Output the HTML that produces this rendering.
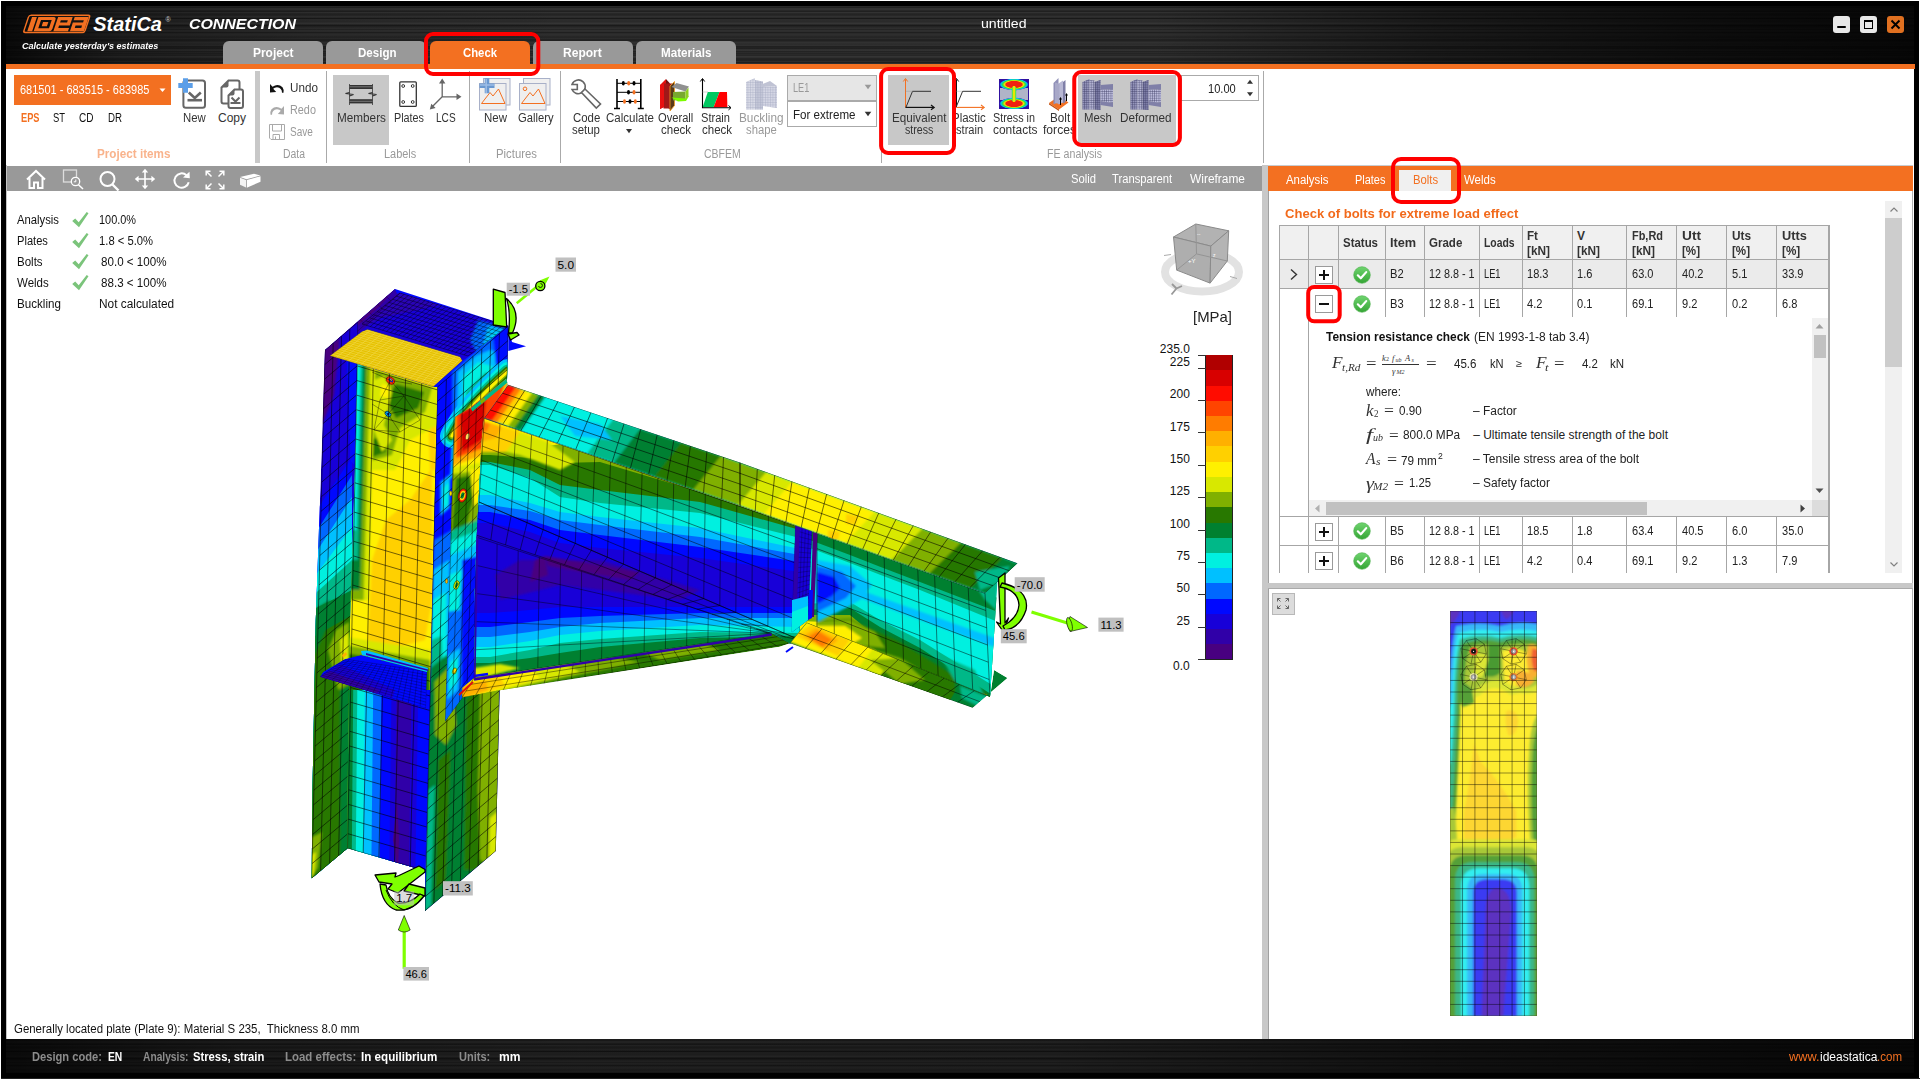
<!DOCTYPE html>
<html lang="en"><head><meta charset="utf-8"><title>IDEA StatiCa Connection</title><style>
html,body{margin:0;padding:0;background:#fff;}
body{width:1920px;height:1079px;position:relative;overflow:hidden;font-family:"Liberation Sans",sans-serif;}
.r{position:absolute;display:block;}
.t{position:absolute;white-space:pre;display:block;transform-origin:0 50%;}
.tex{background:linear-gradient(to right,rgba(0,0,0,.8) 0,rgba(0,0,0,.35) 6%,rgba(0,0,0,.1) 16%,rgba(0,0,0,0) 30%,rgba(0,0,0,0) 60%,rgba(0,0,0,.45) 75%,rgba(0,0,0,.7) 88%,rgba(0,0,0,.85) 100%),repeating-linear-gradient(to bottom,rgba(0,0,0,.0) 0,rgba(0,0,0,.35) 1.5px,rgba(0,0,0,0) 3px,rgba(0,0,0,.25) 5px,rgba(0,0,0,0) 6.5px,rgba(0,0,0,.4) 9px,rgba(0,0,0,0) 11px),repeating-linear-gradient(to bottom,#3a3a3a 0,#222 1px,#464646 2px,#2a2a2a 3px,#404040 4px,#202020 5px,#383838 7px);}
.tex2{background:linear-gradient(to right,rgba(0,0,0,.7) 0,rgba(0,0,0,.25) 12%,rgba(0,0,0,.05) 30%,rgba(0,0,0,.1) 55%,rgba(0,0,0,.5) 75%,rgba(0,0,0,.8) 100%),repeating-linear-gradient(to bottom,rgba(0,0,0,.0) 0,rgba(0,0,0,.35) 1.5px,rgba(0,0,0,0) 3px,rgba(0,0,0,.25) 5px,rgba(0,0,0,0) 6.5px,rgba(0,0,0,.4) 9px,rgba(0,0,0,0) 11px),repeating-linear-gradient(to bottom,#2a2a2a 0,#1a1a1a 1px,#323232 2px,#202020 3px,#2c2c2c 4px,#161616 5px,#282828 7px);}
</style></head><body>
<div class="r" style="left:0px;top:0px;width:1920px;height:1079px;background:#fff;"></div>
<div class="r" style="left:1px;top:1px;width:1918px;height:1077px;background:#000;"></div>
<div class="r tex" style="left:6px;top:6px;width:1908px;height:58px"></div>
<div class="r" style="left:6px;top:64px;width:1909px;height:5px;background:#f37021;"></div>
<div class="r" style="left:6px;top:69px;width:1908px;height:970px;background:#fff;"></div>
<div class="r tex2" style="left:6px;top:1039px;width:1908px;height:33.5px"></div>
<div class="r" style="left:1px;top:1078px;width:1919px;height:1px;background:#222;"></div>
<svg class="r" style="left:0;top:0" width="200" height="60" viewBox="0 0 200 60">
<g transform="translate(0,33.2) skewX(-18.4) translate(0,-33.2)" fill="#f37021">
<rect x="23.1" y="15.3" width="61.1" height="17.2" rx="2" fill="none" stroke="#f37021" stroke-width="1.5"/>
<rect x="26.6" y="16.9" width="4.9" height="14.3"/>
<path d="M33 16.9h15.400q2.500 0 2.500 2.500v9.300q0 2.500-2.500 2.500h-15.400z M36.600 19.900v8.300h10.700v-8.300z M39.300 21.900h5.300v4.300h-5.300z" fill-rule="evenodd"/>
<path d="M52.700 16.900h14.600v8.700h-10.800v2.300h10.800v3.300h-14.600z M56.500 20.200v2.300h7v-2.300z" fill-rule="evenodd"/>
<path d="M69.300 16.900h14v14.300h-14v-8.700h10.200v-2.300h-10.200z M73 25.600v2.300h6.500v-2.300z" fill-rule="evenodd"/>
</g>
<text x="93.3" y="31.2" font-family="Liberation Sans,sans-serif" font-weight="700" font-style="italic" font-size="20" fill="#fff" textLength="68.6" lengthAdjust="spacingAndGlyphs">StatiCa</text>
<text x="165.5" y="22" font-family="Liberation Sans,sans-serif" font-size="7" fill="#ccc">®</text>
</svg>
<span class="t" style="left:189.0px;top:15.3px;font-size:15px;line-height:18.0px;color:#fff;transform:scaleX(1.061);font-weight:700;font-style:italic;">CONNECTION</span>
<span class="t" style="left:21.8px;top:41.2px;font-size:9px;line-height:10.8px;color:#fff;transform:scaleX(1.004);font-weight:700;font-style:italic;">Calculate yesterday&#x27;s estimates</span>
<span class="t" style="left:980.5px;top:16.1px;font-size:13.5px;line-height:16.2px;color:#fff;transform:scaleX(1.045);">untitled</span>
<div class="r" style="left:1833px;top:16px;width:17px;height:17px;background:#e8e8e8;border-radius:3px"></div>
<div class="r" style="left:1837px;top:26px;width:9px;height:2px;background:#000;border-radius:1px"></div>
<div class="r" style="left:1860px;top:16px;width:17px;height:17px;background:#e8e8e8;border-radius:3px"></div>
<div class="r" style="left:1864px;top:20px;width:9px;height:9px;background:#e8e8e8;box-sizing:border-box;border:1.5px solid #000;border-top-width:2px"></div>
<div class="r" style="left:1887px;top:16px;width:17px;height:17px;background:#e07020;border-radius:3px"></div>
<svg class="r" style="left:1887px;top:16px" width="17" height="17"><path d="M4.500 4.500l8 8M12.500 4.500l-8 8" stroke="#000" stroke-width="2"/></svg>
<div class="r" style="left:223px;top:41px;width:100px;height:23px;background:#999;border-radius:6px 6px 0 0"></div>
<span class="t" style="left:253.0px;top:44.9px;font-size:13px;line-height:15.6px;color:#fff;transform:scaleX(0.919);font-weight:700;">Project</span>
<div class="r" style="left:326.3px;top:41px;width:100px;height:23px;background:#999;border-radius:6px 6px 0 0"></div>
<span class="t" style="left:357.5px;top:44.9px;font-size:13px;line-height:15.6px;color:#fff;transform:scaleX(0.888);font-weight:700;">Design</span>
<div class="r" style="left:429.7px;top:41px;width:100px;height:23px;background:#f37021;border-radius:6px 6px 0 0"></div>
<span class="t" style="left:463.0px;top:44.9px;font-size:13px;line-height:15.6px;color:#fff;transform:scaleX(0.871);font-weight:700;">Check</span>
<div class="r" style="left:533px;top:41px;width:100px;height:23px;background:#999;border-radius:6px 6px 0 0"></div>
<span class="t" style="left:563.1px;top:44.9px;font-size:13px;line-height:15.6px;color:#fff;transform:scaleX(0.926);font-weight:700;">Report</span>
<div class="r" style="left:636.3px;top:41px;width:100px;height:23px;background:#999;border-radius:6px 6px 0 0"></div>
<span class="t" style="left:660.6px;top:44.9px;font-size:13px;line-height:15.6px;color:#fff;transform:scaleX(0.894);font-weight:700;">Materials</span>
<div class="r" style="left:14px;top:75px;width:157px;height:29.5px;background:#f37021;"></div>
<span class="t" style="left:20.0px;top:83.0px;font-size:12px;line-height:14.4px;color:#fff;transform:scaleX(0.915);">681501 - 683515 - 683985</span>
<svg class="r" style="left:159px;top:88px" width="8" height="5" viewBox="0 0 8 5"><path d="M0.500 0.500h6l-3 3.500z" fill="#fff"/></svg>
<span class="t" style="left:20.5px;top:110.5px;font-size:12px;line-height:14.4px;color:#f37021;transform:scaleX(0.770);font-weight:700;">EPS</span>
<span class="t" style="left:53.0px;top:110.5px;font-size:12px;line-height:14.4px;color:#111;transform:scaleX(0.783);">ST</span>
<span class="t" style="left:78.5px;top:110.5px;font-size:12px;line-height:14.4px;color:#111;transform:scaleX(0.837);">CD</span>
<span class="t" style="left:107.5px;top:110.5px;font-size:12px;line-height:14.4px;color:#111;transform:scaleX(0.808);">DR</span>
<span class="t" style="left:96.5px;top:146.6px;font-size:12px;line-height:14.4px;color:#f9b38c;transform:scaleX(0.975);font-weight:700;">Project items</span>
<svg class="r" style="left:176px;top:76px" width="34" height="35" viewBox="0 0 34 35"><rect x="7.400" y="4.500" width="21.600" height="27.300" rx="2.500" fill="#fff" stroke="#666" stroke-width="2"/>
<path d="M11.500 24.200h14.500" stroke="#666" stroke-width="2.600"/><path d="M12.800 16.500l6 5.500 6-5.500" fill="none" stroke="#666" stroke-width="2.600"/>
<path d="M2.300 9.500h14.400M9.500 2.300v14.400" stroke="#5b9ee8" stroke-width="5"/></svg>
<span class="t" style="left:182.7px;top:110.5px;font-size:12px;line-height:14.4px;color:#333;transform:scaleX(0.946);">New</span>
<svg class="r" style="left:218px;top:76px" width="28" height="35" viewBox="0 0 28 35"><path d="M3.500 11.500l7-7h9q2 0 2 2v19q0 2-2 2h-14q-2 0-2-2z" fill="#fff" stroke="#666" stroke-width="2"/><path d="M3.500 11.500l7-7v5q0 2-2 2z" fill="#666"/>
<path d="M10.500 19.500l6-6h6.500q2 0 2 2v14.500q0 2-2 2h-10.500q-2 0-2-2z" fill="#fff" stroke="#666" stroke-width="2"/><path d="M10.500 19.500l6-6v4q0 2-2 2z" fill="#666"/>
<path d="M12.500 27h10" stroke="#666" stroke-width="2"/><path d="M13.500 21.500l4 4 4-4" fill="none" stroke="#666" stroke-width="2"/></svg>
<span class="t" style="left:218.0px;top:110.5px;font-size:12px;line-height:14.4px;color:#333;transform:scaleX(1.000);">Copy</span>
<div class="r" style="left:255px;top:71px;width:5px;height:92px;background:#c8c8c8;"></div>
<svg class="r" style="left:268px;top:82px" width="18" height="12" viewBox="0 0 18 12"><path d="M2 10.500v-8.500l2.500 2.800q5.500-4 10 0.500q1.500 2 1 5.500h-1.500q0-5-5-5.500q-2.500 0-3.800 1.500l3 3.200z" fill="#111"/></svg>
<span class="t" style="left:289.6px;top:81.0px;font-size:12px;line-height:14.4px;color:#333;transform:scaleX(0.973);">Undo</span>
<svg class="r" style="left:268px;top:104px" width="18" height="12" viewBox="0 0 18 12"><path d="M16 10.500v-8.500l-2.500 2.800q-5.500-4-10 0.500q-1.500 2-1 5.500h1.500q0-5 5-5.500q2.500 0 3.800 1.500l-3 3.200z" fill="#aaa"/></svg>
<span class="t" style="left:289.6px;top:102.6px;font-size:12px;line-height:14.4px;color:#999;transform:scaleX(0.903);">Redo</span>
<svg class="r" style="left:268px;top:123px" width="18" height="18" viewBox="0 0 18 18"><path d="M1.500 1.500h15v15h-13.500l-1.500-1.500z" fill="#fff" stroke="#aaa" stroke-width="1"/><path d="M4.500 1.500v6.500h9v-6.500M5 16.500v-5h6.500v5M7.500 13.500v3" fill="none" stroke="#aaa" stroke-width="1"/></svg>
<span class="t" style="left:289.6px;top:124.6px;font-size:12px;line-height:14.4px;color:#999;transform:scaleX(0.837);">Save</span>
<span class="t" style="left:283.0px;top:146.6px;font-size:12px;line-height:14.4px;color:#999;transform:scaleX(0.868);">Data</span>
<div class="r" style="left:326px;top:71px;width:1px;height:92px;background:#aaa;"></div>
<div class="r" style="left:333px;top:75px;width:56px;height:70px;background:#c8c8c8;"></div>
<svg class="r" style="left:340px;top:80px" width="42" height="28" viewBox="0 0 42 28"><path d="M9.500 4v21M32.500 4v21" stroke="#555" stroke-width="1"/>
<rect x="9.500" y="5" width="23" height="4" fill="#333"/><rect x="9.500" y="6.300" width="23" height="1" fill="#777"/>
<rect x="9.500" y="19.200" width="23" height="4.200" fill="#333"/><rect x="9.500" y="20.800" width="23" height="1" fill="#777"/>
<path d="M9.500 12.500l-4 1 8 1-4 1.500M32.500 12.500l-4 1 8 1-4 1.500" fill="none" stroke="#333" stroke-width="1.200"/></svg>
<span class="t" style="left:336.7px;top:110.5px;font-size:12px;line-height:14.4px;color:#333;transform:scaleX(0.978);">Members</span>
<svg class="r" style="left:396px;top:78px" width="24" height="32" viewBox="0 0 24 32"><rect x="3.800" y="3.800" width="16.500" height="24.600" rx="1" fill="#fff" stroke="#333" stroke-width="1.300"/>
<g fill="#fff" stroke="#333" stroke-width="1"><circle cx="7.200" cy="8" r="1.400"/><circle cx="16.700" cy="8" r="1.400"/><circle cx="7.200" cy="24" r="1.400"/><circle cx="16.700" cy="24" r="1.400"/></g></svg>
<span class="t" style="left:393.7px;top:110.5px;font-size:12px;line-height:14.4px;color:#333;transform:scaleX(0.900);">Plates</span>
<svg class="r" style="left:427px;top:76px" width="37" height="36" viewBox="0 0 37 36"><path d="M15.200 20.800v-15.500M15.200 20.800h16M15.200 20.800l-10.500 10.500" stroke="#666" stroke-width="1.300" fill="none"/>
<path d="M15.200 2.500l-3.200 5h6.400zM34.500 20.800l-5-3.200v6.400zM2.800 33.500l1.500-5.800 4.300 4.300z" fill="#666"/></svg>
<span class="t" style="left:436.4px;top:110.5px;font-size:12px;line-height:14.4px;color:#333;transform:scaleX(0.840);">LCS</span>
<span class="t" style="left:383.5px;top:146.6px;font-size:12px;line-height:14.4px;color:#999;transform:scaleX(0.913);">Labels</span>
<div class="r" style="left:469px;top:71px;width:1px;height:92px;background:#aaa;"></div>
<svg class="r" style="left:479px;top:78px" width="32" height="33" viewBox="0 0 32 33"><rect x="4.5" y="0.500" width="26.500" height="26.500" fill="#f0f0f0" stroke="#a8b0c8" stroke-width="1"/>
<rect x="0.500" y="5.500" width="26.500" height="26.500" fill="#efefef" stroke="#a8b0c8" stroke-width="1"/>
<path d="M2.500 25.500l8.500-11 3 3.500 5.500-7 6.500 14.500z" fill="none" stroke="#f37021" stroke-width="1"/><path d="M0.500 7.800h15M8 0.300v15" stroke="#6a98d0" stroke-width="4.600"/><path d="M1 7h14M7.200 1v14" stroke="#9dbde6" stroke-width="1.500"/></svg>
<span class="t" style="left:483.8px;top:110.5px;font-size:12px;line-height:14.4px;color:#333;transform:scaleX(0.956);">New</span>
<svg class="r" style="left:519px;top:78px" width="32" height="33" viewBox="0 0 32 33"><rect x="4.5" y="0.500" width="26.500" height="26.500" fill="#f0f0f0" stroke="#a8b0c8" stroke-width="1"/>
<rect x="0.500" y="5.500" width="26.500" height="26.500" fill="#efefef" stroke="#a8b0c8" stroke-width="1"/>
<path d="M2.500 25.500l8.500-11 3 3.500 5.500-7 6.500 14.500z" fill="none" stroke="#f37021" stroke-width="1"/><circle cx="6" cy="10.800" r="1.800" fill="none" stroke="#f37021" stroke-width="1"/></svg>
<span class="t" style="left:517.5px;top:110.5px;font-size:12px;line-height:14.4px;color:#333;transform:scaleX(0.934);">Gallery</span>
<span class="t" style="left:495.8px;top:146.6px;font-size:12px;line-height:14.4px;color:#999;transform:scaleX(0.944);">Pictures</span>
<div class="r" style="left:560px;top:71px;width:1px;height:92px;background:#aaa;"></div>
<svg class="r" style="left:569px;top:77px" width="34" height="34" viewBox="0 0 34 34"><path d="M3 7.500a6.800 6.800 0 1 1 9.500 8.300l-0.500 0.300 0 0a6.800 6.800 0 0 1-9-3.600h5.300v-5z" fill="#fff" stroke="#666" stroke-width="1.600"/>
<path d="M12.500 15.500l3.500-3.500 15.500 15-4.200 4z" fill="#fff" stroke="#666" stroke-width="1.600"/></svg>
<span class="t" style="left:572.5px;top:110.5px;font-size:12px;line-height:14.4px;color:#333;transform:scaleX(0.952);">Code</span>
<span class="t" style="left:572.3px;top:122.6px;font-size:12px;line-height:14.4px;color:#333;transform:scaleX(0.950);">setup</span>
<svg class="r" style="left:612px;top:77px" width="34" height="34" viewBox="0 0 34 34"><path d="M5 2v29.500M28.800 2v29.500M2 31.500h6M25.800 31.500h6" stroke="#000" stroke-width="1.600" fill="none"/>
<path d="M5 6.300h23.800M5 15.300h23.800M5 24.500h23.800" stroke="#000" stroke-width="1"/>
<g fill="#000"><ellipse cx="11.300" cy="6.300" rx="1.500" ry="2.200"/><ellipse cx="22" cy="6.300" rx="1.500" ry="2.200"/><ellipse cx="16.500" cy="15.300" rx="1.500" ry="2.200"/><ellipse cx="18" cy="24.500" rx="1.500" ry="2.200"/></g>
<g fill="#f37021"><ellipse cx="16.700" cy="6.300" rx="1.500" ry="2.200"/><ellipse cx="22" cy="15.300" rx="1.500" ry="2.200"/><ellipse cx="12.500" cy="24.500" rx="1.500" ry="2.200"/><ellipse cx="23.300" cy="24.500" rx="1.500" ry="2.200"/></g></svg>
<span class="t" style="left:605.7px;top:110.5px;font-size:12px;line-height:14.4px;color:#333;transform:scaleX(0.960);">Calculate</span>
<svg class="r" style="left:625px;top:128px" width="8" height="6" viewBox="0 0 8 6"><path d="M1 1h6l-3 4.300z" fill="#333"/></svg>
<svg class="r" style="left:658px;top:77px" width="33" height="34" viewBox="0 0 33 34"><path d="M2 8l6-6v27l-6 3z" fill="#e01010"/><path d="M8 2l4 4.500v26l-4-3.500z" fill="#701010"/><path d="M5.500 6.500h8.500v25h-8.500z" fill="#a01818"/><path d="M2 8v24l4-2v-23.500z" fill="#e81010"/>
<path d="M12 9l4.500-4.500v24l-4.500 5.500z" fill="#5a3a18" stroke="#f39a21" stroke-width=".8"/>
<path d="M13.500 10l5-4 12.500 3.500-3.500 5z" fill="#909090"/><path d="M15 15l12.500-0.500 0 8-12.500 1z" fill="#78a830"/><path d="M13.500 20.500l14 1 3.500-2.500-3 5-8 0.500z" fill="#7cfc00"/><path d="M27.500 14.500l3-4v9l-3 3z" fill="#90d020"/></svg>
<span class="t" style="left:657.7px;top:110.5px;font-size:12px;line-height:14.4px;color:#333;transform:scaleX(0.929);">Overall</span>
<span class="t" style="left:660.7px;top:122.6px;font-size:12px;line-height:14.4px;color:#333;transform:scaleX(0.960);">check</span>
<svg class="r" style="left:699px;top:77px" width="34" height="34" viewBox="0 0 34 34"><path d="M3.600 21.800l5.200-15.200h11.700l-5.900 15.200z" transform="translate(0,8.500)" fill="#00c860"/><path d="M14.600 30.300l5.900-15.200h7.500l0.400 15.200z" fill="#ff0000"/>
<path d="M3.500 2v28.700h28" fill="none" stroke="#000" stroke-width="1.100"/><path d="M1.300 4.500l2.200-3 2.200 3M29.500 28.500l2.500 2.200-2.500 2.200" fill="none" stroke="#000" stroke-width="1"/>
<path d="M3.500 15h6" stroke="#888" stroke-width=".8" stroke-dasharray="1 1"/></svg>
<span class="t" style="left:701.0px;top:110.5px;font-size:12px;line-height:14.4px;color:#333;transform:scaleX(0.925);">Strain</span>
<span class="t" style="left:701.7px;top:122.6px;font-size:12px;line-height:14.4px;color:#333;transform:scaleX(0.960);">check</span>
<svg class="r" style="left:745px;top:77px" width="33" height="34" viewBox="0 0 33 34"><defs><pattern id="gr" width="2.500" height="2.500" patternUnits="userSpaceOnUse"><path d="M0 0h2.500M0 0v2.500" stroke="#a4a8c0" stroke-width=".7"/></pattern></defs>
<path d="M1 5l9-4v31.500h-9z" fill="#d8dae6"/><path d="M1 5l9-4v31.500h-9z" fill="url(#gr)"/><path d="M10 3l8 1.500v28h-8z" fill="#c4c7d8"/><path d="M10 3l8 1.500v28h-8z" fill="url(#gr)"/>
<path d="M18 10l14-1v22l-14-2z" fill="#d4d6e4"/><path d="M18 10l14-1v22l-14-2z" fill="url(#gr)"/><path d="M15 8l10-4 7 5-14 1z" fill="#c0c3d4"/></svg>
<span class="t" style="left:738.8px;top:110.5px;font-size:12px;line-height:14.4px;color:#999;transform:scaleX(0.982);">Buckling</span>
<span class="t" style="left:746.2px;top:122.6px;font-size:12px;line-height:14.4px;color:#999;transform:scaleX(0.940);">shape</span>
<div class="r" style="left:787px;top:75px;width:90px;height:26px;background:#e6e6e6;box-sizing:border-box;border:1px solid #aaa"></div>
<span class="t" style="left:792.5px;top:81.4px;font-size:12px;line-height:14.4px;color:#999;transform:scaleX(0.761);">LE1</span>
<svg class="r" style="left:864px;top:84px" width="8" height="6" viewBox="0 0 8 6"><path d="M0.700 0.700h6.600l-3.300 4.600z" fill="#999"/></svg>
<div class="r" style="left:787px;top:101px;width:90px;height:26px;background:#fff;box-sizing:border-box;border:1px solid #aaa"></div>
<span class="t" style="left:792.5px;top:107.6px;font-size:12px;line-height:14.4px;color:#222;transform:scaleX(0.966);">For extreme</span>
<svg class="r" style="left:864px;top:110.5px" width="8" height="6" viewBox="0 0 8 6"><path d="M0.700 0.700h6.600l-3.300 4.600z" fill="#333"/></svg>
<span class="t" style="left:703.8px;top:146.6px;font-size:12px;line-height:14.4px;color:#999;transform:scaleX(0.873);">CBFEM</span>
<div class="r" style="left:881px;top:71px;width:1px;height:92px;background:#aaa;"></div>
<div class="r" style="left:888px;top:75px;width:61px;height:70px;background:#c8c8c8;"></div>
<svg class="r" style="left:900px;top:76px" width="38" height="35" viewBox="0 0 38 35"><path d="M5.500 31.400v-28" stroke="#f37021" stroke-width="1"/><path d="M3.300 5.500l2.200-3 2.200 3" fill="none" stroke="#f37021" stroke-width="1"/>
<path d="M5.500 31.400h28" stroke="#111" stroke-width="1.200"/><path d="M31 29l3.200 2.400-3.200 2.400" fill="none" stroke="#111" stroke-width="1.200"/>
<path d="M6 31.200l6.500-15.900h18.500" fill="none" stroke="#333" stroke-width="1"/><path d="M5.500 15.300h7" stroke="#888" stroke-width=".7" stroke-dasharray="1 1"/></svg>
<span class="t" style="left:891.5px;top:110.6px;font-size:12px;line-height:14.4px;color:#333;transform:scaleX(0.971);">Equivalent</span>
<span class="t" style="left:904.5px;top:122.6px;font-size:12px;line-height:14.4px;color:#333;transform:scaleX(0.887);">stress</span>
<svg class="r" style="left:950px;top:76px" width="38" height="35" viewBox="0 0 38 35"><path d="M6.500 31.400v-28" stroke="#111" stroke-width="1"/><path d="M4.300 5.500l2.200-3 2.200 3" fill="none" stroke="#111" stroke-width="1"/>
<path d="M6.500 31.400h27" stroke="#f37021" stroke-width="1.100"/><path d="M31 29l3.200 2.400-3.200 2.400" fill="none" stroke="#f37021" stroke-width="1.100"/>
<path d="M6.300 30.700l6.300-15.400h18.400" fill="none" stroke="#333" stroke-width="1"/><path d="M6.500 15.300h6" stroke="#888" stroke-width=".7" stroke-dasharray="1 1"/></svg>
<span class="t" style="left:952.0px;top:110.6px;font-size:12px;line-height:14.4px;color:#333;transform:scaleX(0.955);">Plastic</span>
<span class="t" style="left:956.0px;top:122.6px;font-size:12px;line-height:14.4px;color:#333;transform:scaleX(0.927);">strain</span>
<svg class="r" style="left:999px;top:79px" width="30" height="30" viewBox="0 0 30 30"><defs><radialGradient id="sc"><stop offset="0" stop-color="#f02010"/><stop offset=".55" stop-color="#f02010"/><stop offset=".65" stop-color="#ffe000"/><stop offset=".78" stop-color="#30e040"/><stop offset=".9" stop-color="#00c8f0"/><stop offset="1" stop-color="#2020c0"/></radialGradient></defs>
<rect width="30" height="30" fill="#3010a0"/><rect x="1" y="9" width="28" height="12" fill="#b0b4c8"/>
<ellipse cx="15" cy="5.500" rx="14.500" ry="5.800" fill="url(#sc)"/><ellipse cx="15" cy="24.500" rx="14.500" ry="5.800" fill="url(#sc)"/>
<rect x="12.800" y="8" width="4.400" height="14" fill="#40e060"/><rect x="13.800" y="7" width="2.400" height="16" fill="#e8e800"/></svg>
<span class="t" style="left:993.0px;top:110.6px;font-size:12px;line-height:14.4px;color:#333;transform:scaleX(0.900);">Stress in</span>
<span class="t" style="left:992.5px;top:122.6px;font-size:12px;line-height:14.4px;color:#333;transform:scaleX(0.996);">contacts</span>
<svg class="r" style="left:1047px;top:77px" width="24" height="34" viewBox="0 0 24 34"><path d="M2 26l10-7 9.500 6.500-9.500 7z" fill="#f37021"/><path d="M2 26l10 6.500v1.500l-10-6.500z" fill="#c05010"/>
<path d="M6.500 6l5-5v24l-5 2.500z" fill="#9090b8"/><path d="M11.500 6.500l4.500-3v22l-4.500 2z" fill="#b8b8d4"/><path d="M16 5l2.500-2v22l-2.500 1.500z" fill="#8080a8"/><path d="M8 5.500l4.500 1.500v20l-4.500-1z" fill="#a8a8c8"/>
<path d="M13.500 28v-7M19.500 24v-7" stroke="#000" stroke-width="1"/><path d="M12 22.500l1.500-2.500 1.500 2.500zM18 18.500l1.500-2.500 1.500 2.500z" fill="#000"/></svg>
<span class="t" style="left:1049.6px;top:110.6px;font-size:12px;line-height:14.4px;color:#333;transform:scaleX(0.974);">Bolt</span>
<span class="t" style="left:1043.0px;top:122.6px;font-size:12px;line-height:14.4px;color:#333;transform:scaleX(1.010);">forces</span>
<div class="r" style="left:1078px;top:75px;width:98px;height:70px;background:#c8c8c8;"></div>
<svg class="r" style="left:1082px;top:78px" width="32" height="32" viewBox="0 0 32 32"><defs><pattern id="gm1" width="2.200" height="2.200" patternUnits="userSpaceOnUse"><path d="M0 0h2.200M0 0v2.200" stroke="#3c3c64" stroke-width=".7"/></pattern></defs>
<path d="M0.500 4l7-3v30.500h-7z" fill="#9494ba"/><path d="M0.500 4l7-3v30.500h-7z" fill="url(#gm1)"/>
<path d="M7.500 2l5 0.500v29h-5z" fill="#b4b4d4"/><path d="M7.500 2l5 0.500v29h-5z" fill="url(#gm1)"/>
<path d="M12.500 4l6-2v30l-6-0.500z" fill="#7c7ca6"/><path d="M12.500 4l6-2v30l-6-0.500z" fill="url(#gm1)"/>
<path d="M18.500 7l12.500-1 0 5-12.500 1z" fill="#8080a8"/><path d="M18.500 12l12.500-1v14l-12.500-2z" fill="#bcbcdc"/><path d="M18.500 12l12.500-1v14l-12.500-2z" fill="url(#gm1)"/>
<path d="M18.500 23l12.500 2v4l-12.500-2z" fill="#8080a8"/></svg>
<span class="t" style="left:1083.5px;top:110.6px;font-size:12px;line-height:14.4px;color:#333;transform:scaleX(0.946);">Mesh</span>
<svg class="r" style="left:1130px;top:78px" width="32" height="32" viewBox="0 0 32 32"><defs><pattern id="gm2" width="2.200" height="2.200" patternUnits="userSpaceOnUse"><path d="M0 0h2.200M0 0v2.200" stroke="#3c3c64" stroke-width=".7"/></pattern></defs>
<path d="M0.500 4l7-3v30.500h-7z" fill="#9494ba"/><path d="M0.500 4l7-3v30.500h-7z" fill="url(#gm2)"/>
<path d="M7.500 2l5 0.500v29h-5z" fill="#b4b4d4"/><path d="M7.500 2l5 0.500v29h-5z" fill="url(#gm2)"/>
<path d="M12.500 4l6-2v30l-6-0.500z" fill="#7c7ca6"/><path d="M12.500 4l6-2v30l-6-0.500z" fill="url(#gm2)"/>
<path d="M18.500 7l12.500-1 0 5-12.500 1z" fill="#8080a8"/><path d="M18.500 12l12.500-1v14l-12.500-2z" fill="#bcbcdc"/><path d="M18.500 12l12.500-1v14l-12.500-2z" fill="url(#gm2)"/>
<path d="M18.500 23l12.500 2v4l-12.500-2z" fill="#8080a8"/></svg>
<span class="t" style="left:1119.8px;top:110.6px;font-size:12px;line-height:14.4px;color:#333;transform:scaleX(0.977);">Deformed</span>
<div class="r" style="left:1181px;top:75px;width:78px;height:26px;background:#fff;box-sizing:border-box;border:1px solid #aaa"></div>
<span class="t" style="left:1207.5px;top:81.6px;font-size:12px;line-height:14.4px;color:#222;transform:scaleX(0.924);">10.00</span>
<svg class="r" style="left:1246px;top:79px" width="8" height="18" viewBox="0 0 8 18"><path d="M1 4.800h6l-3-4zM1 13.200h6l-3 4z" fill="#333"/></svg>
<span class="t" style="left:1046.9px;top:146.6px;font-size:12px;line-height:14.4px;color:#999;transform:scaleX(0.887);">FE analysis</span>
<div class="r" style="left:1263px;top:71px;width:1px;height:92px;background:#aaa;"></div>
<div class="r" style="left:6px;top:165px;width:1px;height:874px;background:#c4c4c4;"></div>
<div class="r" style="left:7px;top:165.5px;width:1255px;height:25px;background:#999;"></div>
<svg class="r" style="left:24px;top:168px" width="24" height="22" viewBox="0 0 24 22"><path d="M3 11.500l9-8.500 9 8.500M5.500 10v10h4.500v-5.500h4v5.500h4.500v-10" fill="none" stroke="#fff" stroke-width="2" stroke-linejoin="miter"/></svg>
<svg class="r" style="left:61px;top:168px" width="24" height="22" viewBox="0 0 24 22"><rect x="2.500" y="2" width="13" height="12" fill="none" stroke="#ddd" stroke-width="1.300"/><circle cx="14.500" cy="13.500" r="4.200" fill="#999" stroke="#fff" stroke-width="1.300"/><path d="M17.500 16.700l4.500 4.300" stroke="#fff" stroke-width="1.500"/><path d="M14.800 11.500v2.300h-2" fill="none" stroke="#fff" stroke-width="1"/></svg>
<svg class="r" style="left:98px;top:168px" width="24" height="24" viewBox="0 0 24 24"><circle cx="9.500" cy="11" r="7" fill="none" stroke="#fff" stroke-width="2"/><path d="M14.500 16.500l6 6" stroke="#fff" stroke-width="2.400"/></svg>
<svg class="r" style="left:134px;top:168px" width="22" height="22" viewBox="0 0 22 22"><path d="M11 2v18M2 11h18" stroke="#fff" stroke-width="1.600"/><path d="M11 0.800l3.200 3.800h-6.400zM11 21.200l3.200-3.800h-6.400zM0.800 11l3.800-3.200v6.400zM21.200 11l-3.800-3.200v6.400z" fill="#fff"/></svg>
<svg class="r" style="left:171px;top:170px" width="20" height="20" viewBox="0 0 20 20"><path d="M15.500 5.200a7.200 7.200 0 1 0 2.200 7" fill="none" stroke="#fff" stroke-width="2"/><path d="M12 7.500l6.800 0.700-0.300-6.500z" fill="#fff"/></svg>
<svg class="r" style="left:204px;top:169px" width="22" height="22" viewBox="0 0 22 22"><g fill="none" stroke="#fff" stroke-width="1.500"><path d="M2.200 6.500v-4.300h4.300M2.500 2.500l5 5M15.500 2.200h4.300v4.300M19.500 2.500l-5 5M2.200 15.500v4.300h4.300M2.500 19.500l5-5M19.800 15.500v4.300h-4.300M19.500 19.500l-5-5"/></g></svg>
<svg class="r" style="left:238px;top:172px" width="24" height="17" viewBox="0 0 24 17"><path d="M2 5l14-3.200 6.500 1.700-14 3.800z" fill="#fff"/><path d="M2 5.800l6 2.200v7.500l-6-2.800z" fill="#f4f4f4"/><path d="M8.800 8l13.700-3.700v5.500l-13.700 5.900z" fill="#fff"/></svg>
<span class="t" style="left:1071.0px;top:172.0px;font-size:12px;line-height:14.4px;color:#fff;transform:scaleX(0.937);">Solid</span>
<span class="t" style="left:1112.0px;top:172.0px;font-size:12px;line-height:14.4px;color:#fff;transform:scaleX(0.934);">Transparent</span>
<span class="t" style="left:1190.0px;top:172.0px;font-size:12px;line-height:14.4px;color:#fff;transform:scaleX(0.994);">Wireframe</span>
<span class="t" style="left:17.1px;top:212.6px;font-size:12px;line-height:14.4px;color:#111;transform:scaleX(0.940);">Analysis</span>
<span class="t" style="left:98.8px;top:212.6px;font-size:12px;line-height:14.4px;color:#111;transform:scaleX(0.909);">100.0%</span>
<svg class="r" style="left:71px;top:210.6px" width="19" height="17" viewBox="0 0 19 17"><path d="M1.200 10l3-2.600 3.500 3.800 8-10.200 1.800 1.300-9.500 14z" fill="#7bc47b"/></svg>
<span class="t" style="left:17.1px;top:233.7px;font-size:12px;line-height:14.4px;color:#111;transform:scaleX(0.926);">Plates</span>
<span class="t" style="left:98.8px;top:233.7px;font-size:12px;line-height:14.4px;color:#111;transform:scaleX(0.937);">1.8 &lt; 5.0%</span>
<svg class="r" style="left:71px;top:231.7px" width="19" height="17" viewBox="0 0 19 17"><path d="M1.200 10l3-2.600 3.500 3.800 8-10.200 1.800 1.300-9.500 14z" fill="#7bc47b"/></svg>
<span class="t" style="left:17.1px;top:254.6px;font-size:12px;line-height:14.4px;color:#111;transform:scaleX(0.960);">Bolts</span>
<span class="t" style="left:101.3px;top:254.6px;font-size:12px;line-height:14.4px;color:#111;transform:scaleX(0.967);">80.0 &lt; 100%</span>
<svg class="r" style="left:71px;top:252.60000000000002px" width="19" height="17" viewBox="0 0 19 17"><path d="M1.200 10l3-2.600 3.500 3.800 8-10.200 1.800 1.300-9.500 14z" fill="#7bc47b"/></svg>
<span class="t" style="left:17.1px;top:275.5px;font-size:12px;line-height:14.4px;color:#111;transform:scaleX(0.957);">Welds</span>
<span class="t" style="left:101.3px;top:275.5px;font-size:12px;line-height:14.4px;color:#111;transform:scaleX(0.967);">88.3 &lt; 100%</span>
<svg class="r" style="left:71px;top:273.5px" width="19" height="17" viewBox="0 0 19 17"><path d="M1.200 10l3-2.600 3.500 3.800 8-10.200 1.800 1.300-9.500 14z" fill="#7bc47b"/></svg>
<span class="t" style="left:17.1px;top:296.5px;font-size:12px;line-height:14.4px;color:#111;transform:scaleX(0.968);">Buckling</span>
<span class="t" style="left:98.8px;top:296.5px;font-size:12px;line-height:14.4px;color:#111;transform:scaleX(0.989);">Not calculated</span>
<svg class="r" style="left:1155px;top:218px" width="100" height="82" viewBox="0 0 100 82"><ellipse cx="47" cy="54" rx="37" ry="19.500" fill="none" stroke="#e2e2e2" stroke-width="8"/>
<g stroke="#8a8a8a" stroke-width="1" stroke-linejoin="round"><path d="M18.500 19l22.300-13 32.900 6.800-17.900 15.300z" fill="#b2b2b2"/><path d="M18.500 19l37.300 9.100-0.700 37-33.400-13z" fill="#aeaeae"/><path d="M55.800 28.100l17.900-15.300-1.400 30.200-17.200 22.100z" fill="#b4b4b4"/>
<path d="M40.800 6l0.700 29.900-19.800 16.200M41.500 35.900l30.800 7.100" fill="none" stroke="#949494"/></g>
<path d="M17 66l4.500 4.500M27 68l-5.500 2.500-5 6" fill="none" stroke="#999" stroke-width="1.800"/>
<path d="M9 37.500l7-1M75 58.500l7 2" stroke="#aaa" stroke-width="1"/><text x="33" y="45" font-size="6" fill="#fff" font-family="Liberation Sans,sans-serif">+Y</text><text x="58" y="39" font-size="5" fill="#fff" font-family="Liberation Sans,sans-serif">z</text><text x="42" y="18" font-size="5" fill="#fff" font-family="Liberation Sans,sans-serif">--</text></svg>
<span class="t" style="left:1192.6px;top:308.1px;font-size:15px;line-height:18.0px;color:#222;transform:scaleX(0.993);">[MPa]</span>
<div class="r" style="left:1205.5px;top:355.2px;width:26.5px;height:15.52px;background:#b00000;"></div>
<div class="r" style="left:1205.5px;top:370.41px;width:26.5px;height:15.52px;background:#d80000;"></div>
<div class="r" style="left:1205.5px;top:385.63px;width:26.5px;height:15.52px;background:#ff0c00;"></div>
<div class="r" style="left:1205.5px;top:400.84px;width:26.5px;height:15.52px;background:#ff4400;"></div>
<div class="r" style="left:1205.5px;top:416.06px;width:26.5px;height:15.52px;background:#ff7c00;"></div>
<div class="r" style="left:1205.5px;top:431.27px;width:26.5px;height:15.52px;background:#ffb000;"></div>
<div class="r" style="left:1205.5px;top:446.49px;width:26.5px;height:15.52px;background:#ffd000;"></div>
<div class="r" style="left:1205.5px;top:461.7px;width:26.5px;height:15.52px;background:#fff000;"></div>
<div class="r" style="left:1205.5px;top:476.92px;width:26.5px;height:15.52px;background:#d8e800;"></div>
<div class="r" style="left:1205.5px;top:492.13px;width:26.5px;height:15.52px;background:#80b000;"></div>
<div class="r" style="left:1205.5px;top:507.35px;width:26.5px;height:15.52px;background:#287800;"></div>
<div class="r" style="left:1205.5px;top:522.57px;width:26.5px;height:15.52px;background:#008030;"></div>
<div class="r" style="left:1205.5px;top:537.78px;width:26.5px;height:15.52px;background:#00b888;"></div>
<div class="r" style="left:1205.5px;top:553.0px;width:26.5px;height:15.52px;background:#00f0e0;"></div>
<div class="r" style="left:1205.5px;top:568.21px;width:26.5px;height:15.52px;background:#00c0ff;"></div>
<div class="r" style="left:1205.5px;top:583.42px;width:26.5px;height:15.52px;background:#0068ff;"></div>
<div class="r" style="left:1205.5px;top:598.64px;width:26.5px;height:15.52px;background:#0008ff;"></div>
<div class="r" style="left:1205.5px;top:613.86px;width:26.5px;height:15.52px;background:#1800d8;"></div>
<div class="r" style="left:1205.5px;top:629.07px;width:26.5px;height:15.52px;background:#3000a8;"></div>
<div class="r" style="left:1205.5px;top:644.28px;width:26.5px;height:15.52px;background:#480080;"></div>
<div class="r" style="left:1205px;top:355.2px;width:1px;height:304.5px;background:#222;"></div>
<div class="r" style="left:1231.5px;top:355.2px;width:1px;height:304.5px;background:#222;"></div>
<div class="r" style="left:1205px;top:659.2px;width:27.5px;height:1px;background:#222;"></div>
<span class="t" style="left:1159.8px;top:342.0px;font-size:12px;line-height:14.4px;color:#111;transform:scaleX(1.000);">235.0</span>
<div class="r" style="left:1198px;top:354.7px;width:7.5px;height:1px;background:#333;"></div>
<span class="t" style="left:1169.8px;top:354.7px;font-size:12px;line-height:14.4px;color:#111;transform:scaleX(1.000);">225</span>
<div class="r" style="left:1198px;top:367.6px;width:7.5px;height:1px;background:#333;"></div>
<span class="t" style="left:1169.8px;top:386.9px;font-size:12px;line-height:14.4px;color:#111;transform:scaleX(1.000);">200</span>
<div class="r" style="left:1198px;top:400.0px;width:7.5px;height:1px;background:#333;"></div>
<span class="t" style="left:1169.8px;top:419.9px;font-size:12px;line-height:14.4px;color:#111;transform:scaleX(1.000);">175</span>
<div class="r" style="left:1198px;top:432.4px;width:7.5px;height:1px;background:#333;"></div>
<span class="t" style="left:1169.8px;top:451.9px;font-size:12px;line-height:14.4px;color:#111;transform:scaleX(1.000);">150</span>
<div class="r" style="left:1198px;top:464.8px;width:7.5px;height:1px;background:#333;"></div>
<span class="t" style="left:1169.8px;top:483.7px;font-size:12px;line-height:14.4px;color:#111;transform:scaleX(1.000);">125</span>
<div class="r" style="left:1198px;top:497.1px;width:7.5px;height:1px;background:#333;"></div>
<span class="t" style="left:1169.8px;top:516.9px;font-size:12px;line-height:14.4px;color:#111;transform:scaleX(1.000);">100</span>
<div class="r" style="left:1198px;top:529.5px;width:7.5px;height:1px;background:#333;"></div>
<span class="t" style="left:1176.5px;top:548.7px;font-size:12px;line-height:14.4px;color:#111;transform:scaleX(1.000);">75</span>
<div class="r" style="left:1198px;top:561.9px;width:7.5px;height:1px;background:#333;"></div>
<span class="t" style="left:1176.5px;top:580.8px;font-size:12px;line-height:14.4px;color:#111;transform:scaleX(1.000);">50</span>
<div class="r" style="left:1198px;top:594.3px;width:7.5px;height:1px;background:#333;"></div>
<span class="t" style="left:1176.5px;top:613.6px;font-size:12px;line-height:14.4px;color:#111;transform:scaleX(1.000);">25</span>
<div class="r" style="left:1198px;top:626.6px;width:7.5px;height:1px;background:#333;"></div>
<span class="t" style="left:1173.1px;top:659.3px;font-size:12px;line-height:14.4px;color:#111;transform:scaleX(1.000);">0.0</span>
<div class="r" style="left:1198px;top:659.0px;width:7.5px;height:1px;background:#333;"></div>
<span class="t" style="left:14.2px;top:1021.6px;font-size:12px;line-height:14.4px;color:#111;transform:scaleX(0.953);">Generally located plate (Plate 9): Material S 235,  Thickness 8.0 mm</span>
<svg class="r" style="left:0;top:0" width="1262" height="1039" viewBox="0 0 1262 1039"><defs><filter id="b1" x="-10%" y="-10%" width="120%" height="120%"><feGaussianBlur stdDeviation="1.2"/></filter><filter id="b2" x="-10%" y="-10%" width="120%" height="120%"><feGaussianBlur stdDeviation="2.5"/></filter></defs><polygon points="325.0,350.0 395.0,289.0 508.3,325.8 495.8,851.0 425.0,911.0 425.0,870.8 347.5,848.3 311.7,878.3" fill="#0008ff" /><clipPath id="c1"><polygon points="395.0,289.0 397.0,294.0 400.0,292.5 508.3,325.8 508.3,350.0 473.3,353.3 462.5,361.0 460.0,356.7 367.5,329.2 362.0,331.5 330.0,355.8 325.0,350.0"/></clipPath><g clip-path="url(#c1)"><polygon points="395.0,289.0 397.0,294.0 400.0,292.5 508.3,325.8 508.3,350.0 473.3,353.3 462.5,361.0 460.0,356.7 367.5,329.2 362.0,331.5 330.0,355.8 325.0,350.0" fill="#1800d8" /><polygon points="395.0,289.0 325.0,350.0 330.0,356.0 366.0,327.0 400.0,294.0" fill="#3000a8" /><polygon points="395.0,289.0 325.0,350.0 327.0,353.0 380.0,306.0" fill="#480080" /><polygon points="400.0,293.0 440.0,305.0 380.0,318.0 366.0,327.0" fill="#2a04b8" /><g filter="url(#b1)"><polygon points="478.0,320.0 508.0,328.0 508.0,350.0 476.0,352.0 470.0,340.0" fill="#0068ff" /><polygon points="488.0,326.0 508.0,330.0 508.0,350.0 482.0,350.0" fill="#00c0ff" /><polygon points="494.0,334.0 508.0,334.0 508.0,348.0 488.0,350.0" fill="#00f0e0" /></g><path d="M400.0 293.0L362.0 324.0M404.2 294.3L366.1 325.2M408.3 295.5L370.2 326.5M412.5 296.8L374.2 327.7M416.7 298.0L378.3 328.9M420.8 299.3L382.4 330.2M425.0 300.6L386.5 331.4M429.2 301.8L390.5 332.6M433.3 303.1L394.6 333.8M437.5 304.4L398.7 335.1M441.7 305.6L402.8 336.3M445.8 306.9L406.8 337.5M450.0 308.1L410.9 338.8M454.1 309.4L415.0 340.0M458.3 310.7L419.1 341.2M462.5 311.9L423.2 342.5M466.6 313.2L427.2 343.7M470.8 314.4L431.3 344.9M475.0 315.7L435.4 346.2M479.1 317.0L439.5 347.4M483.3 318.2L443.5 348.6M487.5 319.5L447.6 349.8M491.6 320.8L451.7 351.1M495.8 322.0L455.8 352.3M500.0 323.3L459.8 353.5M504.1 324.5L463.9 354.8M508.3 325.8L468.0 356.0M400.0 293.0L508.3 325.8M396.2 296.1L504.3 328.8M392.4 299.2L500.2 331.8M388.6 302.3L496.2 334.9M384.8 305.4L492.2 337.9M381.0 308.5L488.1 340.9M377.2 311.6L484.1 343.9M373.4 314.7L480.1 346.9M369.6 317.8L476.1 350.0M365.8 320.9L472.0 353.0M362.0 324.0L468.0 356.0" fill="none" stroke="#000" stroke-width="0.6" opacity="0.7"/><path d="M395.0 289.0L325.0 350.0M400.0 293.0L330.0 356.0M395.0 289.0L400.0 293.0M386.2 296.6L391.2 300.9M377.5 304.2L382.5 308.8M368.8 311.9L373.8 316.6M360.0 319.5L365.0 324.5M351.2 327.1L356.2 332.4M342.5 334.8L347.5 340.2M333.8 342.4L338.8 348.1M325.0 350.0L330.0 356.0" fill="none" stroke="#000" stroke-width="0.5" opacity="0.5"/></g><polygon points="508.3,326.0 508.3,351.0 526.0,346.3 512.0,342.0" fill="#0008ff" /><clipPath id="c2"><polygon points="325.0,350.0 358.0,322.0 355.8,440.0 350.0,620.0 347.5,790.0 347.5,848.3 311.7,878.3 312.5,790.0 315.8,620.0 321.7,450.0"/></clipPath><g clip-path="url(#c2)"><polygon points="325.0,350.0 358.0,322.0 355.8,440.0 350.0,620.0 347.5,790.0 347.5,848.3 311.7,878.3 312.5,790.0 315.8,620.0 321.7,450.0" fill="#1800d8" /><polygon points="308.0,523.0 352.0,457.0 352.0,900.0 308.0,900.0" fill="#0008ff" /><polygon points="308.0,545.0 352.0,475.0 352.0,900.0 308.0,900.0" fill="#0068ff" /><polygon points="308.0,565.0 352.0,497.0 352.0,900.0 308.0,900.0" fill="#00c0ff" /><polygon points="308.0,585.0 352.0,527.0 352.0,900.0 308.0,900.0" fill="#00f0e0" /><polygon points="308.0,600.0 352.0,560.0 352.0,900.0 308.0,900.0" fill="#00b888" /><polygon points="308.0,612.0 352.0,590.0 352.0,900.0 308.0,900.0" fill="#008030" /><polygon points="308.0,640.0 352.0,615.0 352.0,900.0 308.0,900.0" fill="#287800" /><polygon points="315.4,640.0 349.7,625.0 347.5,900.0 311.7,900.0" fill="#287800" /><g filter="url(#b1)"><polygon points="340.0,690.0 350.0,685.0 350.0,850.0 340.0,858.0" fill="#008030" /><polygon points="328.0,650.0 336.0,630.0 349.0,622.0 349.0,684.0 338.0,690.0" fill="#80b000" /><polygon points="340.0,640.0 349.0,632.0 349.0,672.0 342.0,676.0" fill="#d8e800" /><polygon points="310.0,612.0 330.0,600.0 326.0,630.0 312.0,660.0" fill="#008030" /><polygon points="310.0,838.0 322.0,832.0 318.0,868.0 310.0,880.0" fill="#80b000" /><polygon points="310.0,856.0 316.0,852.0 314.0,874.0 310.0,880.0" fill="#d8e800" /><polygon points="321.0,352.0 340.0,337.0 334.0,395.0 322.0,425.0" fill="#480080" /><polygon points="346.0,345.0 358.0,334.0 357.0,470.0 350.0,460.0" fill="#0008ff" /></g><path d="M325.0 350.0L311.7 878.3M333.2 343.0L320.6 870.8M341.5 336.0L329.6 863.3M349.8 329.0L338.6 855.8M358.0 322.0L347.5 848.3M325.0 350.0L358.0 322.0M324.6 364.7L357.7 336.6M324.3 379.4L357.4 351.2M323.9 394.0L357.1 365.9M323.5 408.7L356.8 380.5M323.2 423.4L356.5 395.1M322.8 438.0L356.2 409.7M322.4 452.7L356.0 424.3M322.0 467.4L355.7 439.0M321.7 482.1L355.4 453.6M321.3 496.8L355.1 468.2M320.9 511.4L354.8 482.8M320.6 526.1L354.5 497.4M320.2 540.8L354.2 512.1M319.8 555.5L353.9 526.7M319.5 570.1L353.6 541.3M319.1 584.8L353.3 555.9M318.7 599.5L353.0 570.5M318.4 614.1L352.8 585.1M318.0 628.8L352.5 599.8M317.6 643.5L352.2 614.4M317.2 658.2L351.9 629.0M316.9 672.9L351.6 643.6M316.5 687.5L351.3 658.2M316.1 702.2L351.0 672.9M315.8 716.9L350.7 687.5M315.4 731.5L350.4 702.1M315.0 746.2L350.1 716.7M314.7 760.9L349.8 731.3M314.3 775.6L349.5 746.0M313.9 790.2L349.2 760.6M313.5 804.9L349.0 775.2M313.2 819.6L348.7 789.8M312.8 834.3L348.4 804.4M312.4 848.9L348.1 819.1M312.1 863.6L347.8 833.7M311.7 878.3L347.5 848.3" fill="none" stroke="#000" stroke-width="0.7" opacity="0.8"/></g><clipPath id="c3"><polygon points="357.3,364.0 433.3,386.7 437.5,387.0 436.2,440.0 431.9,620.0 427.9,790.0 425.0,870.8 347.5,848.3 347.5,790.0 350.0,620.0 355.8,440.0"/></clipPath><g clip-path="url(#c3)"><polygon points="357.3,364.0 433.3,386.7 437.5,387.0 436.2,440.0 431.9,620.0 427.9,790.0 425.0,870.8 347.5,848.3 347.5,790.0 350.0,620.0 355.8,440.0" fill="#fff000" /><g filter="url(#b1)"><polygon points="432.0,468.0 410.0,500.0 386.0,520.0 372.0,560.0 368.0,640.0 385.0,650.0 425.0,640.0 432.0,600.0" fill="#ffd000" /><polygon points="436.0,395.0 428.0,400.0 430.0,470.0 436.0,470.0" fill="#ffd000" /><polygon points="366.0,366.0 440.0,388.0 438.0,425.0 410.0,440.0 395.0,470.0 366.0,470.0" fill="#d8e800" /><polygon points="368.0,368.0 432.0,388.0 425.0,412.0 400.0,428.0 392.0,455.0 368.0,462.0" fill="#80b000" /><polygon points="396.0,384.0 424.0,392.0 418.0,408.0 396.0,418.0 386.0,400.0" fill="#287800" /><polygon points="370.0,440.0 384.0,436.0 386.0,452.0 370.0,458.0" fill="#287800" /><polygon points="374.0,380.0 384.0,376.0 392.0,392.0 384.0,425.0 392.0,440.0 382.0,452.0 374.0,430.0" fill="#d8e800" /><polygon points="382.0,384.0 390.0,386.0 388.0,398.0 380.0,396.0" fill="#fff000" /><polygon points="354.3,362.0 375.3,362.0 368.6,600.0 347.6,600.0" fill="#d8e800" /><polygon points="354.3,362.0 370.3,362.0 363.6,600.0 347.6,600.0" fill="#80b000" /><polygon points="354.3,362.0 366.3,362.0 360.0,590.0 348.0,590.0" fill="#008030" /><polygon points="354.3,362.0 363.3,362.0 357.9,560.0 348.9,560.0" fill="#00b888" /><polygon points="353.3,362.0 360.8,362.0 356.4,530.0 348.9,530.0" fill="#00f0e0" /><polygon points="340.0,636.0 430.0,650.0 430.0,720.0 340.0,700.0" fill="#d8e800" /><polygon points="340.0,644.0 430.0,660.0 430.0,720.0 340.0,700.0" fill="#80b000" /><polygon points="340.0,652.0 430.0,668.0 430.0,720.0 340.0,700.0" fill="#287800" /></g><polygon points="346.0,690.0 431.0,690.0 427.9,880.0 344.6,880.0" fill="#008030" /><polygon points="353.2,690.0 431.0,690.0 427.9,880.0 351.6,880.0" fill="#00b888" /><polygon points="357.3,690.0 431.0,690.0 427.9,880.0 355.6,880.0" fill="#00f0e0" /><polygon points="364.8,690.0 431.0,690.0 427.9,880.0 363.0,880.0" fill="#00c0ff" /><polygon points="373.2,690.0 431.0,690.0 427.9,880.0 371.2,880.0" fill="#0068ff" /><polygon points="381.5,690.0 431.0,690.0 427.9,880.0 379.4,880.0" fill="#0008ff" /><polygon points="391.5,690.0 431.0,690.0 427.9,880.0 389.1,880.0" fill="#1800d8" /><polygon points="396.5,690.0 431.0,690.0 427.9,880.0 394.1,880.0" fill="#3000a8" /><polygon points="411.5,690.0 431.0,690.0 427.9,880.0 408.8,880.0" fill="#1800d8" /><polygon points="418.2,690.0 431.0,690.0 427.9,880.0 415.3,880.0" fill="#0008ff" /><polygon points="393.0,840.0 397.0,800.0 399.0,840.0 398.0,872.0" fill="#480080" /><ellipse cx="390.500" cy="380.500" rx="4.600" ry="3.300" transform="rotate(35 390.5 380.5)" fill="#ff3000" stroke="#701000" stroke-width=".6"/><ellipse cx="390.800" cy="380.300" rx="2.600" ry="1.500" transform="rotate(35 390.8 380.3)" fill="#0030ff"/><ellipse cx="391" cy="380.200" rx="1.200" ry=".7" transform="rotate(35 391 380.2)" fill="#fff000"/><ellipse cx="388" cy="414" rx="3.400" ry="2.200" transform="rotate(40 388 414)" fill="#00c0ff" stroke="#003" stroke-width=".6"/><ellipse cx="388" cy="414" rx="1.600" ry="1" transform="rotate(40 388 414)" fill="#0030e0"/><path d="M358.0 322.0L347.5 848.3M374.2 326.9L363.2 852.8M390.4 331.7L378.9 857.3M406.5 336.6L394.5 861.8M422.7 341.4L410.2 866.3M438.9 346.3L425.9 870.8M358.0 322.0L438.9 346.3M357.7 336.6L438.5 360.9M357.4 351.2L438.2 375.4M357.1 365.9L437.8 390.0M356.8 380.5L437.5 404.6M356.5 395.1L437.1 419.1M356.2 409.7L436.7 433.7M356.0 424.3L436.4 448.3M355.7 439.0L436.0 462.9M355.4 453.6L435.6 477.4M355.1 468.2L435.3 492.0M354.8 482.8L434.9 506.6M354.5 497.4L434.6 521.1M354.2 512.1L434.2 535.7M353.9 526.7L433.8 550.3M353.6 541.3L433.5 564.8M353.3 555.9L433.1 579.4M353.0 570.5L432.8 594.0M352.8 585.1L432.4 608.5M352.5 599.8L432.0 623.1M352.2 614.4L431.7 637.7M351.9 629.0L431.3 652.3M351.6 643.6L431.0 666.8M351.3 658.2L430.6 681.4M351.0 672.9L430.2 696.0M350.7 687.5L429.9 710.5M350.4 702.1L429.5 725.1M350.1 716.7L429.1 739.7M349.8 731.3L428.8 754.2M349.5 746.0L428.4 768.8M349.2 760.6L428.1 783.4M349.0 775.2L427.7 798.0M348.7 789.8L427.3 812.5M348.4 804.4L427.0 827.1M348.1 819.1L426.6 841.7M347.8 833.7L426.3 856.2M347.5 848.3L425.9 870.8" fill="none" stroke="#000" stroke-width="0.7" opacity="0.8"/><path d="M390.500 380.500L372 372M390.500 380.500L380 400M390.500 380.500L404 396M390.500 380.500L412 384M388 414L372 404M388 414L374 430M388 414L400 432M388 414L408 410M388 414L404 396M380 400L404 396L420 420L400 432L374 430Z" fill="none" stroke="#000" stroke-width=".5" opacity=".7"/></g><clipPath id="c4"><polygon points="320.0,676.7 323.0,672.0 345.0,659.0 361.0,655.0 427.0,671.7 426.0,708.3"/></clipPath><g clip-path="url(#c4)"><polygon points="320.0,676.7 323.0,672.0 345.0,659.0 361.0,655.0 427.0,671.7 426.0,708.3" fill="#0008ff" /><polygon points="320.0,677.0 340.0,664.0 395.0,690.0 392.0,700.0" fill="#1800d8" /><polygon points="320.0,677.0 330.0,671.0 380.0,690.0 376.0,694.0" fill="#3000a8" /><path d="M345.0 659.0L320.0 676.7M349.6 659.7L325.9 678.5M354.1 660.4L331.8 680.2M358.7 661.1L337.7 682.0M363.2 661.8L343.6 683.7M367.8 662.5L349.4 685.5M372.3 663.2L355.3 687.2M376.9 663.9L361.2 689.0M381.4 664.6L367.1 690.7M386.0 665.4L373.0 692.5M390.6 666.1L378.9 694.3M395.1 666.8L384.8 696.0M399.7 667.5L390.7 697.8M404.2 668.2L396.6 699.5M408.8 668.9L402.4 701.3M413.3 669.6L408.3 703.0M417.9 670.3L414.2 704.8M422.4 671.0L420.1 706.5M427.0 671.7L426.0 708.3M345.0 659.0L427.0 671.7M342.9 660.5L426.9 674.8M340.8 662.0L426.8 677.8M338.8 663.4L426.8 680.9M336.7 664.9L426.7 683.9M334.6 666.4L426.6 687.0M332.5 667.9L426.5 690.0M330.4 669.3L426.4 693.0M328.3 670.8L426.3 696.1M326.2 672.3L426.2 699.1M324.2 673.8L426.2 702.2M322.1 675.2L426.1 705.2M320.0 676.7L426.0 708.3" fill="none" stroke="#000" stroke-width="0.45" opacity="0.6"/></g><polygon points="361.0,651.0 367.0,650.5 428.0,668.0 427.0,672.0 362.0,655.0" fill="#00c0ff" /><polygon points="366.0,653.0 428.0,669.5 428.0,671.0 366.0,655.0" fill="#3000a8" /><polygon points="342.0,655.0 346.0,652.0 347.0,654.5 343.0,658.0" fill="#ffb000" /><clipPath id="c5"><polygon points="330.0,355.8 362.0,331.5 367.5,329.2 460.0,356.7 462.5,360.8 433.3,386.7"/></clipPath><g clip-path="url(#c5)"><polygon points="330.0,355.8 362.0,331.5 367.5,329.2 460.0,356.7 462.5,360.8 433.3,386.7" fill="#e6c200" /><path d="M364.0 329.5L330.0 355.8M369.7 331.2L336.1 357.6M375.4 332.9L342.2 359.4M381.1 334.5L348.2 361.3M386.8 336.2L354.3 363.1M392.5 337.9L360.4 364.9M398.2 339.6L366.5 366.7M403.9 341.2L372.5 368.5M409.6 342.9L378.6 370.3M415.4 344.6L384.7 372.2M421.1 346.3L390.8 374.0M426.8 347.9L396.8 375.8M432.5 349.6L402.9 377.6M438.2 351.3L409.0 379.4M443.9 353.0L415.1 381.2M449.6 354.6L421.1 383.1M455.3 356.3L427.2 384.9M461.0 358.0L433.3 386.7M364.0 329.5L461.0 358.0M361.9 331.1L459.3 359.8M359.8 332.8L457.5 361.6M357.6 334.4L455.8 363.4M355.5 336.1L454.1 365.2M353.4 337.7L452.3 367.0M351.2 339.4L450.6 368.8M349.1 341.0L448.9 370.6M347.0 342.6L447.1 372.4M344.9 344.3L445.4 374.1M342.8 345.9L443.7 375.9M340.6 347.6L442.0 377.7M338.5 349.2L440.2 379.5M336.4 350.9L438.5 381.3M334.2 352.5L436.8 383.1M332.1 354.2L435.0 384.9M330.0 355.8L433.3 386.7" fill="none" stroke="#f6e060" stroke-width="0.5" opacity="0.9"/></g><polygon points="330.0,355.8 362.0,331.5 367.5,329.2 460.0,356.7 462.5,360.8 433.3,386.7" fill="none" stroke="#5a4a00" stroke-width=".5" opacity=".6"/><clipPath id="c6"><polygon points="437.5,387.0 433.3,386.7 462.5,360.8 473.3,353.3 508.3,325.8 495.8,851.0 425.0,911.0"/></clipPath><g clip-path="url(#c6)"><polygon points="437.5,387.0 433.3,386.7 462.5,360.8 473.3,353.3 508.3,325.8 495.8,851.0 425.0,911.0" fill="#0008ff" /><g filter="url(#b1)"><polygon points="452.0,372.0 475.0,352.0 508.0,327.0 508.0,400.0 452.0,470.0" fill="#0068ff" /><polygon points="458.0,372.0 476.0,356.0 490.0,350.0 508.0,356.0 508.0,400.0 470.0,440.0 456.0,440.0" fill="#00c0ff" /><polygon points="463.0,376.0 478.0,362.0 492.0,366.0 500.0,380.0 480.0,420.0 462.0,430.0" fill="#00f0e0" /><polygon points="492.0,328.0 508.0,327.0 508.0,362.0 496.0,366.0" fill="#0008ff" /><polygon points="466.0,392.0 486.0,372.0 498.0,384.0 480.0,415.0 466.0,425.0" fill="#00b888" /><polygon points="468.0,398.0 488.0,380.0 496.0,390.0 480.0,412.0 468.0,420.0" fill="#287800" /><polygon points="470.0,402.0 490.0,386.0 494.0,392.0 478.0,410.0 470.0,416.0" fill="#d8e800" /></g><g fill="none" stroke-linecap="round"><path d="M452 436Q466 408 508 371" stroke="#00c0ff" stroke-width="24"/><path d="M452 436Q466 408 508 371" stroke="#00f0e0" stroke-width="18"/><path d="M452 436Q466 408 508 371" stroke="#00b888" stroke-width="13"/><path d="M452 436Q466 408 508 371" stroke="#287800" stroke-width="9"/><path d="M452 436Q466 408 508 371" stroke="#80b000" stroke-width="6"/><path d="M452 436Q466 408 508 371" stroke="#fff000" stroke-width="3"/></g><g filter="url(#b1)"><polygon points="452.0,440.0 460.0,436.0 458.0,470.0 450.0,480.0" fill="#00c0ff" /><polygon points="455.0,442.0 461.0,440.0 460.0,460.0 454.0,468.0" fill="#00b888" /><polygon points="440.3,482.0 450.3,474.0 449.4,508.0 440.4,516.0" fill="#00c0ff" /><polygon points="443.2,488.0 449.2,482.0 448.6,504.0 443.6,508.0" fill="#00f0e0" /><polygon points="433.9,540.0 451.9,530.0 450.5,670.0 430.3,690.0" fill="#0068ff" /><polygon points="433.1,570.0 449.1,560.0 448.5,668.0 430.3,690.0" fill="#00c0ff" /><polygon points="432.4,600.0 446.4,592.0 446.3,672.0 430.0,700.0" fill="#00f0e0" /><polygon points="431.5,640.0 441.5,636.0 444.0,686.0 429.8,710.0" fill="#00b888" /><polygon points="430.8,668.0 452.8,650.0 500.0,640.0 500.0,920.0 420.0,920.0" fill="#008030" /><polygon points="434.5,682.0 452.0,664.0 456.0,725.0 446.0,745.0 435.1,735.0" fill="#80b000" /><polygon points="466.3,700.0 500.0,660.0 500.0,870.0 464.2,870.0" fill="#287800" /><polygon points="480.3,690.0 500.0,660.0 500.0,870.0 480.2,860.0 477.9,790.0" fill="#80b000" /><polygon points="490.0,818.0 497.0,812.0 497.0,852.0 489.0,858.0" fill="#d8e800" /><polygon points="438.6,760.0 450.6,750.0 445.7,880.0 435.7,890.0" fill="#287800" /><polygon points="427.9,790.0 434.9,785.0 431.0,905.0 425.0,911.0" fill="#00b888" /></g><ellipse cx="450.800" cy="493.500" rx="1.300" ry="2.400" fill="#ffe000" stroke="#440" stroke-width=".4"/><ellipse cx="446.500" cy="581" rx="1.300" ry="2.600" fill="#ffb000" stroke="#440" stroke-width=".4"/><path d="M437.5 387.0L425.0 911.0M446.4 379.4L433.9 903.5M455.2 371.8L442.7 896.0M464.1 364.1L451.6 888.5M472.9 356.5L460.4 881.0M481.8 348.9L469.2 873.5M490.6 341.2L478.1 866.0M499.4 333.6L486.9 858.5M508.3 326.0L495.8 851.0M437.5 387.0L508.3 326.0M437.2 401.6L508.0 340.6M436.8 416.1L507.6 355.2M436.5 430.7L507.3 369.8M436.1 445.2L506.9 384.3M435.8 459.8L506.6 398.9M435.4 474.3L506.2 413.5M435.1 488.9L505.9 428.1M434.7 503.4L505.5 442.7M434.4 518.0L505.2 457.2M434.0 532.6L504.8 471.8M433.7 547.1L504.5 486.4M433.3 561.7L504.1 501.0M433.0 576.2L503.8 515.6M432.6 590.8L503.4 530.2M432.3 605.3L503.1 544.8M431.9 619.9L502.7 559.3M431.6 634.4L502.4 573.9M431.2 649.0L502.1 588.5M430.9 663.6L501.7 603.1M430.6 678.1L501.4 617.7M430.2 692.7L501.0 632.2M429.9 707.2L500.7 646.8M429.5 721.8L500.3 661.4M429.2 736.3L500.0 676.0M428.8 750.9L499.6 690.6M428.5 765.4L499.3 705.2M428.1 780.0L498.9 719.8M427.8 794.6L498.6 734.3M427.4 809.1L498.2 748.9M427.1 823.7L497.9 763.5M426.7 838.2L497.5 778.1M426.4 852.8L497.2 792.7M426.0 867.3L496.8 807.2M425.7 881.9L496.5 821.8M425.3 896.4L496.1 836.4M425.0 911.0L495.8 851.0" fill="none" stroke="#000" stroke-width="0.7" opacity="0.8"/></g><clipPath id="c7"><polygon points="455.0,417.0 470.0,408.0 506.0,379.0 508.0,385.0 484.2,418.3 481.7,440.0 476.7,537.0 474.2,610.0 474.2,681.7 445.0,721.7 451.0,527.0 454.0,440.0"/></clipPath><g clip-path="url(#c7)"><polygon points="455.0,417.0 470.0,408.0 506.0,379.0 508.0,385.0 484.2,418.3 481.7,440.0 476.7,537.0 474.2,610.0 474.2,681.7 445.0,721.7 451.0,527.0 454.0,440.0" fill="#0068ff" /><g filter="url(#b1)"><polygon points="452.0,400.0 510.0,375.0 486.0,470.0 450.0,480.0" fill="#fff000" /><polygon points="454.0,404.0 508.0,378.0 484.0,455.0 452.0,466.0" fill="#ffb000" /><polygon points="456.0,408.0 506.0,380.0 483.0,448.0 456.0,458.0" fill="#ff4400" /><polygon points="460.0,414.0 486.0,400.0 482.0,440.0 462.0,452.0" fill="#d80000" /><polygon points="450.0,468.0 486.0,462.0 484.0,530.0 448.0,545.0" fill="#d8e800" /><polygon points="452.0,474.0 484.0,470.0 480.0,522.0 450.0,536.0" fill="#80b000" /><polygon points="456.0,478.0 480.0,474.0 478.0,485.0 470.0,510.0 466.0,528.0 452.0,530.0" fill="#287800" /><polygon points="470.0,470.0 482.0,468.0 481.0,500.0 474.0,506.0" fill="#fff000" /><polygon points="448.0,532.0 482.0,518.0 480.0,548.0 448.0,560.0" fill="#00b888" /><polygon points="448.0,542.0 480.0,530.0 478.0,556.0 448.0,570.0" fill="#00f0e0" /><polygon points="448.0,556.0 478.0,544.0 476.0,570.0 448.0,585.0" fill="#00c0ff" /><polygon points="462.0,560.0 478.0,556.0 476.0,690.0 462.0,700.0" fill="#0008ff" /><polygon points="449.0,575.0 462.0,570.0 460.0,610.0 448.0,612.0" fill="#00f0e0" /><polygon points="448.0,655.0 460.0,648.0 458.0,690.0 447.0,700.0" fill="#00c0ff" /><polygon points="450.0,662.0 458.0,657.0 457.0,682.0 449.0,690.0" fill="#00f0e0" /></g><ellipse cx="467.500" cy="436.500" rx="2" ry="3.300" transform="rotate(15 467.5 436.5)" fill="#ffe060" stroke="#700" stroke-width=".5"/><ellipse cx="462.500" cy="495.500" rx="4.300" ry="6.800" transform="rotate(15 462.5 495.5)" fill="#ff2000" stroke="#400" stroke-width=".5"/><ellipse cx="462.500" cy="495.500" rx="2.800" ry="4.800" transform="rotate(15 462.5 495.5)" fill="#ffd000"/><ellipse cx="462.500" cy="495.500" rx="1.600" ry="3.200" transform="rotate(15 462.5 495.5)" fill="#008030"/><ellipse cx="456.500" cy="585" rx="2.600" ry="4.500" transform="rotate(18 456.5 585)" fill="#d8e800" stroke="#040" stroke-width=".5"/><ellipse cx="456.500" cy="585" rx="1.200" ry="2.800" transform="rotate(18 456.5 585)" fill="#008030"/><ellipse cx="454.500" cy="671" rx="2" ry="3.200" transform="rotate(18 454.5 671)" fill="#ffe000" stroke="#040" stroke-width=".5"/><path d="M455.0 417.0L445.0 722.0M462.2 410.8L452.2 712.0M469.5 404.5L459.5 702.0M476.8 398.2L466.8 692.0M484.0 392.0L474.0 682.0M455.0 417.0L484.0 392.0M454.6 429.7L483.6 404.1M454.2 442.4L483.2 416.2M453.8 455.1L482.8 428.2M453.3 467.8L482.3 440.3M452.9 480.5L481.9 452.4M452.5 493.2L481.5 464.5M452.1 506.0L481.1 476.6M451.7 518.7L480.7 488.7M451.2 531.4L480.2 500.8M450.8 544.1L479.8 512.8M450.4 556.8L479.4 524.9M450.0 569.5L479.0 537.0M449.6 582.2L478.6 549.1M449.2 594.9L478.2 561.2M448.8 607.6L477.8 573.2M448.3 620.3L477.3 585.3M447.9 633.0L476.9 597.4M447.5 645.8L476.5 609.5M447.1 658.5L476.1 621.6M446.7 671.2L475.7 633.7M446.2 683.9L475.2 645.8M445.8 696.6L474.8 657.8M445.4 709.3L474.4 669.9M445.0 722.0L474.0 682.0" fill="none" stroke="#000" stroke-width="0.6" opacity="0.7"/></g><polygon points="470.8,408.3 505.8,379.2 507.5,382.5 472.5,411.5" fill="#00b888" /><polygon points="480.0,401.0 484.0,397.5 485.5,400.5 481.5,404.0" fill="#80b000" /><clipPath id="c8"><polygon points="484.2,418.3 740.0,505.8 800.0,527.2 800.0,640.0 790.0,643.3 771.7,633.3 474.0,678.0 474.2,610.0 476.7,537.0 481.7,440.0"/></clipPath><g clip-path="url(#c8)"><polygon points="484.2,418.3 740.0,505.8 800.0,527.2 800.0,640.0 790.0,643.3 771.7,633.3 474.0,678.0 474.2,610.0 476.7,537.0 481.7,440.0" fill="#1800d8" /><polygon points="474.0,414.8 490.0,420.3 530.0,434.0 560.0,444.2 600.0,457.9 700.0,492.1 800.0,527.2 800.0,650.0 700.0,660.0 600.0,674.0 560.0,680.0 530.0,686.0 490.0,690.0 474.0,690.0" fill="#fff000" /><polygon points="474.0,446.0 490.0,446.0 530.0,448.0 560.0,444.2 600.0,457.9 700.0,492.1 800.0,527.2 800.0,650.0 700.0,660.0 600.0,674.0 560.0,680.0 530.0,686.0 490.0,690.0 474.0,690.0" fill="#80b000" /><polygon points="474.0,455.0 490.0,455.0 530.0,458.0 560.0,463.0 600.0,461.9 700.0,492.1 800.0,527.2 800.0,650.0 700.0,660.0 600.0,674.0 560.0,680.0 530.0,686.0 490.0,690.0 474.0,690.0" fill="#287800" /><polygon points="474.0,462.0 490.0,462.0 530.0,470.0 560.0,485.0 600.0,490.0 700.0,502.0 800.0,530.0 800.0,650.0 700.0,660.0 600.0,674.0 560.0,680.0 530.0,686.0 490.0,690.0 474.0,690.0" fill="#00b888" /><polygon points="474.0,465.0 490.0,465.0 530.0,478.0 560.0,497.0 600.0,503.0 700.0,513.0 800.0,538.0 800.0,650.0 700.0,660.0 600.0,674.0 560.0,680.0 530.0,686.0 490.0,690.0 474.0,690.0" fill="#00f0e0" /><polygon points="474.0,495.0 490.0,495.0 530.0,503.0 560.0,512.0 600.0,517.0 700.0,528.0 800.0,549.0 800.0,650.0 700.0,660.0 600.0,674.0 560.0,680.0 530.0,686.0 490.0,690.0 474.0,690.0" fill="#00c0ff" /><polygon points="474.0,505.0 490.0,505.0 530.0,511.0 560.0,520.0 600.0,525.0 700.0,537.0 800.0,555.0 800.0,650.0 700.0,660.0 600.0,674.0 560.0,680.0 530.0,686.0 490.0,690.0 474.0,690.0" fill="#0068ff" /><polygon points="474.0,512.0 490.0,512.0 530.0,520.0 560.0,530.0 600.0,535.0 700.0,547.0 800.0,562.0 800.0,650.0 700.0,660.0 600.0,674.0 560.0,680.0 530.0,686.0 490.0,690.0 474.0,690.0" fill="#0008ff" /><polygon points="474.0,523.0 490.0,523.0 530.0,532.0 560.0,543.0 600.0,548.0 700.0,558.0 800.0,572.0 800.0,650.0 700.0,660.0 600.0,674.0 560.0,680.0 530.0,686.0 490.0,690.0 474.0,690.0" fill="#1800d8" /><polygon points="474.0,613.0 490.0,613.0 530.0,610.0 560.0,607.0 600.0,607.0 700.0,607.0 800.0,607.0 800.0,650.0 700.0,660.0 600.0,674.0 560.0,680.0 530.0,686.0 490.0,690.0 474.0,690.0" fill="#0008ff" /><polygon points="474.0,627.0 490.0,627.0 530.0,622.0 560.0,618.0 600.0,616.0 700.0,613.0 800.0,613.0 800.0,650.0 700.0,660.0 600.0,674.0 560.0,680.0 530.0,686.0 490.0,690.0 474.0,690.0" fill="#0068ff" /><polygon points="474.0,637.0 490.0,637.0 530.0,632.0 560.0,627.0 600.0,623.0 700.0,618.0 800.0,618.0 800.0,650.0 700.0,660.0 600.0,674.0 560.0,680.0 530.0,686.0 490.0,690.0 474.0,690.0" fill="#00c0ff" /><polygon points="474.0,647.0 490.0,647.0 530.0,641.0 560.0,635.0 600.0,631.0 700.0,625.0 800.0,627.0 800.0,650.0 700.0,660.0 600.0,674.0 560.0,680.0 530.0,686.0 490.0,690.0 474.0,690.0" fill="#00f0e0" /><polygon points="474.0,657.0 490.0,657.0 530.0,650.0 560.0,643.0 600.0,639.0 700.0,632.0 800.0,633.0 800.0,650.0 700.0,660.0 600.0,674.0 560.0,680.0 530.0,686.0 490.0,690.0 474.0,690.0" fill="#00b888" /><polygon points="474.0,663.0 490.0,663.0 530.0,658.0 560.0,653.0 600.0,647.0 700.0,638.0 800.0,636.0 800.0,650.0 700.0,660.0 600.0,674.0 560.0,680.0 530.0,686.0 490.0,690.0 474.0,690.0" fill="#008030" /><g filter="url(#b1)"><polygon points="480.0,420.0 520.0,432.0 508.0,452.0 480.0,452.0" fill="#ffd000" /><polygon points="480.0,420.0 502.0,427.0 496.0,438.0 480.0,442.0" fill="#ffb000" /><polygon points="480.0,421.0 490.0,424.0 487.0,431.0 480.0,433.0" fill="#ff7c00" /><polygon points="520.0,432.0 548.0,442.0 575.0,462.0 560.0,470.0 520.0,455.0 506.0,452.0" fill="#d8e800" /><polygon points="520.0,560.0 600.0,560.0 700.0,590.0 680.0,600.0 560.0,585.0 500.0,600.0 495.0,575.0" fill="#3000a8" /><polygon points="535.0,560.0 545.0,556.0 548.0,575.0 530.0,582.0" fill="#480080" /><polygon points="545.0,556.0 640.0,572.0 630.0,580.0 548.0,566.0" fill="#480080" /><polygon points="474.0,668.0 500.0,664.0 520.0,668.0 474.0,680.0" fill="#d8e800" /></g><path d="M484.2 418.3L479.0 502.0M500.0 423.7L495.1 508.9M515.8 429.2L511.1 515.8M531.6 434.6L527.1 522.7M547.4 440.1L543.2 529.6M563.1 445.5L559.2 536.5M578.9 451.0L575.3 543.4M594.7 456.4L591.4 550.3M610.5 461.9L607.4 557.2M626.3 467.3L623.5 564.1M642.1 472.8L639.5 571.0M657.9 478.2L655.5 577.9M673.7 483.6L671.6 584.8M689.5 489.1L687.6 591.7M705.3 494.5L703.7 598.6M721.0 500.0L719.8 605.5M736.8 505.4L735.8 612.4M752.6 510.9L751.8 619.3M768.4 516.3L767.9 626.2M784.2 521.8L784.0 633.1M800.0 527.2L800.0 640.0M484.2 418.3L800.0 527.2M483.3 432.2L800.0 546.0M482.5 446.2L800.0 564.8M481.6 460.1L800.0 583.6M480.7 474.1L800.0 602.4M479.9 488.1L800.0 621.2M479.0 502.0L800.0 640.0" fill="none" stroke="#000" stroke-width="0.65" opacity="0.75"/><path d="M479.0 502.0L476.0 535.0M495.1 508.9L490.8 540.0M511.1 515.8L505.5 544.9M527.1 522.7L520.2 549.9M543.2 529.6L535.0 554.8M559.2 536.5L549.8 559.8M575.3 543.4L564.5 564.7M591.4 550.3L579.2 569.6M607.4 557.2L594.0 574.6M623.5 564.1L608.8 579.5M639.5 571.0L623.5 584.5M655.5 577.9L638.2 589.5M671.6 584.8L653.0 594.4M687.6 591.7L667.8 599.4M703.7 598.6L682.5 604.3M719.8 605.5L697.2 609.2M735.8 612.4L712.0 614.2M751.8 619.3L726.8 619.1M767.9 626.2L741.5 624.1M784.0 633.1L756.2 629.0M800.0 640.0L771.0 634.0M479.0 502.0L800.0 640.0M477.5 518.5L785.5 637.0M476.0 535.0L771.0 634.0" fill="none" stroke="#000" stroke-width="0.65" opacity="0.75"/><path d="M476.0 537.0L474.0 678.0M497.1 543.9L495.3 674.8M518.2 550.8L516.5 671.6M539.4 557.6L537.8 668.4M560.5 564.5L559.1 665.2M581.6 571.4L580.3 662.0M602.7 578.3L601.6 658.8M623.9 585.1L622.9 655.6M645.0 592.0L644.1 652.5M666.1 598.9L665.4 649.3M687.2 605.8L686.6 646.1M708.3 612.7L707.9 642.9M729.5 619.5L729.2 639.7M750.6 626.4L750.4 636.5M771.7 633.3L771.7 633.3M476.0 537.0L771.7 633.3M475.6 565.2L771.7 633.3M475.2 593.4L771.7 633.3M474.8 621.6L771.7 633.3M474.4 649.8L771.7 633.3M474.0 678.0L771.7 633.3" fill="none" stroke="#000" stroke-width="0.6" opacity="0.7"/></g><clipPath id="c9"><polygon points="474.0,678.0 771.7,633.3 790.0,643.3 779.7,646.7 496.7,690.8 462.0,697.5 462.0,688.0"/></clipPath><g clip-path="url(#c9)"><polygon points="474.0,678.0 771.7,633.3 790.0,643.3 779.7,646.7 496.7,690.8 462.0,697.5 462.0,688.0" fill="#287800" /><g filter="url(#b1)"><polygon points="462.0,680.0 600.0,655.0 640.0,662.0 462.0,700.0" fill="#80b000" /><polygon points="462.0,680.0 560.0,662.0 580.0,672.0 462.0,700.0" fill="#d8e800" /><polygon points="462.0,682.0 530.0,668.0 540.0,678.0 462.0,700.0" fill="#fff000" /><polygon points="462.0,684.0 500.0,676.0 505.0,686.0 462.0,700.0" fill="#ffd000" /><polygon points="462.0,686.0 486.0,681.0 488.0,690.0 462.0,698.0" fill="#ffb000" /><polygon points="640.0,652.0 700.0,642.0 720.0,650.0 660.0,660.0" fill="#80b000" /></g><path d="M474.0 678.0L462.0 697.5M486.4 676.1L475.7 695.2M498.8 674.3L489.3 693.0M511.2 672.4L503.0 690.7M523.6 670.5L516.7 688.5M536.0 668.7L530.3 686.2M548.4 666.8L544.0 684.0M560.8 665.0L557.7 681.7M573.2 663.1L571.3 679.4M585.6 661.2L585.0 677.2M598.0 659.4L598.7 674.9M610.4 657.5L612.3 672.7M622.9 655.6L626.0 670.4M635.3 653.8L639.7 668.1M647.7 651.9L653.3 665.9M660.1 650.1L667.0 663.6M672.5 648.2L680.7 661.4M684.9 646.3L694.3 659.1M697.3 644.5L708.0 656.8M709.7 642.6L721.7 654.6M722.1 640.8L735.3 652.3M734.5 638.9L749.0 650.1M746.9 637.0L762.7 647.8M759.3 635.2L776.3 645.6M771.7 633.3L790.0 643.3M474.0 678.0L771.7 633.3M470.0 684.5L777.8 636.6M466.0 691.0L783.9 640.0M462.0 697.5L790.0 643.3" fill="none" stroke="#000" stroke-width="0.6" opacity="0.7"/></g><path d="M474 679.500L771.700 634.500" stroke="#3000a8" stroke-width="2.400"/><path d="M474.300 676L488 674" stroke="#0008ff" stroke-width="2.400"/><path d="M459 695L473 682" stroke="#e01010" stroke-width="1.800"/><path d="M477.500 536L474.800 678" stroke="#3000a8" stroke-width="1.600"/><clipPath id="c10"><polygon points="800.0,527.2 985.0,593.3 997.5,581.0 990.0,696.7 806.7,622.5 800.0,630.0"/></clipPath><g clip-path="url(#c10)"><polygon points="800.0,527.2 985.0,593.3 997.5,581.0 990.0,696.7 806.7,622.5 800.0,630.0" fill="#00f0e0" /><polygon points="800.0,527.2 850.0,545.1 880.0,555.8 920.0,570.1 1000.0,598.7 1000.0,700.0 920.0,700.0 880.0,660.0 850.0,660.0 800.0,660.0" fill="#008030" /><polygon points="800.0,536.2 850.0,555.1 880.0,566.8 920.0,582.1 1000.0,612.7 1000.0,700.0 920.0,700.0 880.0,660.0 850.0,660.0 800.0,660.0" fill="#00b888" /><polygon points="800.0,544.2 850.0,563.1 880.0,574.8 920.0,590.1 1000.0,622.7 1000.0,700.0 920.0,700.0 880.0,660.0 850.0,660.0 800.0,660.0" fill="#00f0e0" /><polygon points="800.0,604.0 850.0,602.0 880.0,620.0 920.0,640.0 1000.0,690.0 1000.0,700.0 920.0,700.0 880.0,660.0 850.0,660.0 800.0,660.0" fill="#00b888" /><polygon points="800.0,610.0 850.0,608.0 880.0,627.0 920.0,648.0 1000.0,700.0 1000.0,700.0 920.0,700.0 880.0,660.0 850.0,660.0 800.0,660.0" fill="#008030" /><polygon points="800.0,615.0 850.0,615.0 880.0,640.0 920.0,668.0 1000.0,700.0 1000.0,700.0 920.0,700.0 880.0,660.0 850.0,660.0 800.0,660.0" fill="#80b000" /><polygon points="800.0,621.0 850.0,623.0 880.0,654.0 920.0,668.0 1000.0,700.0 1000.0,700.0 920.0,700.0 880.0,660.0 850.0,660.0 800.0,660.0" fill="#fff000" /><g filter="url(#b1)"><polygon points="817.0,560.0 850.0,566.0 872.0,585.0 860.0,600.0 838.0,612.0 817.0,622.0" fill="#00c0ff" /><polygon points="817.0,566.0 842.0,572.0 856.0,586.0 846.0,598.0 817.0,612.0" fill="#0068ff" /><polygon points="817.0,572.0 834.0,577.0 840.0,588.0 832.0,596.0 817.0,604.0" fill="#0008ff" /><polygon points="860.0,590.0 1000.0,640.0 1000.0,649.0 860.0,598.0" fill="#00c0ff" /><polygon points="817.0,621.0 850.0,619.0 900.0,642.0 950.0,673.0 990.0,696.0 960.0,692.0 900.0,658.0 850.0,642.0 817.0,640.0" fill="#287800" /><polygon points="817.0,622.0 850.0,620.0 875.0,632.0 885.0,648.0 860.0,645.0 817.0,645.0" fill="#80b000" /><polygon points="817.0,626.0 845.0,626.0 862.0,638.0 850.0,645.0 817.0,645.0" fill="#fff000" /><polygon points="940.0,655.0 975.0,670.0 985.0,700.0 960.0,690.0" fill="#00b888" /><polygon points="975.0,585.0 998.0,580.0 996.0,610.0 985.0,600.0" fill="#00b888" /></g><path d="M817.0 533.0L817.0 627.0M833.8 539.0L834.3 634.0M850.6 545.1L851.6 640.9M867.4 551.1L868.9 647.9M884.2 557.1L886.2 654.9M901.0 563.1L903.5 661.9M917.8 569.2L920.8 668.8M934.6 575.2L938.1 675.8M951.4 581.2L955.4 682.8M968.2 587.3L972.7 689.7M985.0 593.3L990.0 696.7M817.0 533.0L985.0 593.3M817.0 548.7L985.8 610.5M817.0 564.3L986.7 627.8M817.0 580.0L987.5 645.0M817.0 595.7L988.3 662.2M817.0 611.3L989.2 679.5M817.0 627.0L990.0 696.7" fill="none" stroke="#000" stroke-width="0.65" opacity="0.75"/></g><clipPath id="c11"><polygon points="790.0,643.3 806.7,622.5 990.0,696.7 994.0,670.0 1007.5,678.0 972.5,707.8"/></clipPath><g clip-path="url(#c11)"><polygon points="790.0,643.3 806.7,622.5 990.0,696.7 994.0,670.0 1007.5,678.0 972.5,707.8" fill="#008030" /><polygon points="880.0,650.0 960.0,684.0 950.0,700.0 870.0,672.0" fill="#287800" /><g filter="url(#b1)"><polygon points="785.0,640.0 810.0,618.0 900.0,655.0 880.0,676.0" fill="#d8e800" /><polygon points="785.0,640.0 810.0,620.0 875.0,646.0 858.0,668.0" fill="#fff000" /><polygon points="795.0,636.0 812.0,624.0 850.0,640.0 838.0,656.0" fill="#ffd000" /><polygon points="803.0,636.0 816.0,628.0 838.0,640.0 826.0,650.0" fill="#ffb000" /><polygon points="808.0,637.0 818.0,631.0 832.0,640.0 822.0,647.0" fill="#ff7c00" /><polygon points="870.0,660.0 900.0,658.0 925.0,680.0 900.0,684.0" fill="#80b000" /><polygon points="955.0,680.0 992.0,694.0 1008.0,678.0 975.0,708.0 955.0,700.0" fill="#008030" /><polygon points="960.0,686.0 988.0,697.0 978.0,706.0 962.0,698.0" fill="#00b888" /></g><path d="M806.7 622.5L790.0 643.3M822.0 628.7L805.2 648.7M837.2 634.9L820.4 654.0M852.5 641.0L835.6 659.4M867.8 647.2L850.8 664.8M883.1 653.4L866.0 670.2M898.4 659.6L881.2 675.5M913.6 665.8L896.5 680.9M928.9 672.0L911.7 686.3M944.2 678.2L926.9 691.7M959.5 684.3L942.1 697.0M974.7 690.5L957.3 702.4M990.0 696.7L972.5 707.8M806.7 622.5L990.0 696.7M798.4 632.9L981.2 702.2M790.0 643.3L972.5 707.8" fill="none" stroke="#000" stroke-width="0.65" opacity="0.75"/></g><path d="M786 652L793 647" stroke="#0008ff" stroke-width="2"/><polygon points="795.5,525.0 812.0,531.0 808.0,620.0 792.0,632.0" fill="#1800d8" /><path d="M795.5 525.0L792.0 632.0M798.8 526.2L795.2 629.6M802.1 527.4L798.4 627.2M805.4 528.6L801.6 624.8M808.7 529.8L804.8 622.4M812.0 531.0L808.0 620.0M795.5 525.0L812.0 531.0M795.3 530.4L811.8 535.5M795.1 535.7L811.6 539.9M795.0 541.0L811.4 544.4M794.8 546.4L811.2 548.8M794.6 551.8L811.0 553.2M794.5 557.1L810.8 557.7M794.3 562.5L810.6 562.1M794.1 567.8L810.4 566.6M793.9 573.1L810.2 571.0M793.8 578.5L810.0 575.5M793.6 583.9L809.8 580.0M793.4 589.2L809.6 584.4M793.2 594.5L809.4 588.9M793.0 599.9L809.2 593.3M792.9 605.2L809.0 597.8M792.7 610.6L808.8 602.2M792.5 616.0L808.6 606.6M792.4 621.3L808.4 611.1M792.2 626.6L808.2 615.5M792.0 632.0L808.0 620.0" fill="none" stroke="#000" stroke-width="0.45" opacity="0.55"/><polygon points="795.5,525.0 800.0,526.5 796.0,628.0 792.0,632.0" fill="#3000a8" /><polygon points="813.0,532.0 817.5,533.5 814.0,617.0 810.0,617.0" fill="#480080" /><polygon points="809.0,590.0 813.0,590.0 812.0,618.0 808.0,620.0" fill="#0008ff" /><polygon points="792.0,600.0 808.0,596.0 808.0,620.0 792.0,632.0" fill="#00c0ff" /><polygon points="792.0,612.0 808.0,606.0 808.0,620.0 792.0,632.0" fill="#00f0e0" /><clipPath id="c12"><polygon points="508.3,384.7 740.0,462.5 1017.5,563.3 985.0,593.3 740.0,505.8 484.2,418.3"/></clipPath><g clip-path="url(#c12)"><polygon points="508.3,384.7 740.0,462.5 1017.5,563.3 985.0,593.3 740.0,505.8 484.2,418.3" fill="#00f0e0" /><g filter="url(#b1)"><polygon points="428.5,399.2 451.5,365.6 517.6,387.8 493.4,421.5" fill="#ff0c00" /><polygon points="491.9,420.9 516.1,387.3 522.6,389.5 498.4,423.1" fill="#ff7c00" /><polygon points="496.9,422.6 521.1,389.0 527.7,391.2 503.3,424.8" fill="#ffd000" /><polygon points="501.8,424.3 526.2,390.7 533.7,393.2 509.3,426.9" fill="#fff000" /><polygon points="507.8,426.4 532.2,392.7 539.8,395.3 515.2,428.9" fill="#80b000" /><polygon points="513.7,428.4 538.3,394.8 546.8,397.6 522.2,431.3" fill="#008030" /><polygon points="520.7,430.8 545.3,397.1 614.4,420.3 588.6,454.0" fill="#00f0e0" /><polygon points="587.1,453.5 612.9,419.8 641.6,429.5 615.4,463.2" fill="#00b888" /><polygon points="613.9,462.7 640.1,429.0 683.0,443.3 656.0,477.1" fill="#008030" /><polygon points="654.6,476.6 681.4,442.8 722.3,456.6 694.7,490.3" fill="#287800" /><polygon points="693.2,489.8 720.8,456.0 767.7,472.5 739.3,505.6" fill="#80b000" /><polygon points="737.8,505.1 766.2,472.0 793.9,482.1 765.1,514.8" fill="#d8e800" /><polygon points="763.6,514.2 792.4,481.5 876.6,512.1 846.4,543.8" fill="#fff000" /><polygon points="844.9,543.3 875.1,511.6 924.0,529.3 893.0,560.5" fill="#d8e800" /><polygon points="891.5,559.9 922.5,528.8 962.3,543.2 930.7,573.9" fill="#80b000" /><polygon points="929.2,573.4 960.8,542.7 1004.6,558.6 972.4,588.8" fill="#287800" /><polygon points="970.9,588.3 1003.1,558.1 1078.3,585.4 1044.7,614.6" fill="#008030" /><polygon points="560.0,416.0 600.0,424.0 612.0,440.0 575.0,436.0" fill="#00c0ff" /><polygon points="846.0,514.0 858.0,516.0 856.0,524.0 846.0,524.0" fill="#ffd000" /><polygon points="828.0,530.0 840.0,532.0 838.0,540.0 828.0,540.0" fill="#ffd000" /><polygon points="975.0,572.0 1010.0,566.0 1000.0,582.0 980.0,590.0" fill="#00b888" /></g><path d="M508.3 384.7L484.2 418.3M524.9 390.3L502.5 424.6M541.4 395.8L520.7 430.8M558.0 401.4L539.0 437.1M574.5 406.9L557.3 443.3M591.0 412.5L575.6 449.6M607.6 418.0L593.8 455.8M624.1 423.6L612.1 462.1M640.7 429.2L630.4 468.3M657.2 434.7L648.6 474.6M673.8 440.3L666.9 480.8M690.4 445.8L685.2 487.1M706.9 451.4L703.5 493.3M723.5 456.9L721.7 499.6M740.0 462.5L740.0 505.8M508.3 384.7L740.0 462.5M502.3 393.1L740.0 473.3M496.2 401.5L740.0 484.1M490.2 409.9L740.0 495.0M484.2 418.3L740.0 505.8" fill="none" stroke="#000" stroke-width="0.7" opacity="0.8"/><path d="M740.0 462.5L740.0 505.8M757.3 468.8L755.3 511.3M774.7 475.1L770.6 516.7M792.0 481.4L785.9 522.2M809.4 487.7L801.2 527.7M826.7 494.0L816.6 533.1M844.1 500.3L831.9 538.6M861.4 506.6L847.2 544.1M878.8 512.9L862.5 549.5M896.1 519.2L877.8 555.0M913.4 525.5L893.1 560.5M930.8 531.8L908.4 566.0M948.1 538.1L923.8 571.4M965.5 544.4L939.1 576.9M982.8 550.7L954.4 582.4M1000.2 557.0L969.7 587.8M1017.5 563.3L985.0 593.3M740.0 462.5L1017.5 563.3M740.0 473.3L1009.4 570.8M740.0 484.1L1001.2 578.3M740.0 495.0L993.1 585.8M740.0 505.8L985.0 593.3" fill="none" stroke="#000" stroke-width="0.7" opacity="0.8"/></g><g stroke="#000" stroke-width="1.3" stroke-linejoin="round"><path d="M516.700 303.300L543 281.500" stroke="#7fff00" stroke-width="2.600"/><path d="M549.500 276.500L539.500 280.500 544.500 286z" fill="#7fff00" stroke="none"/><circle cx="540.300" cy="286" r="4.600" fill="#7fff00"/><path d="M540.500 283.500a2 2 0 1 1-2 2.500" fill="none" stroke-width=".8"/><path d="M493.300 289.200L505 292.500L506.700 327L493.300 325z" fill="#7fff00"/><path d="M506.500 298.500Q522 312 512.500 333L508.500 333Q511 312 506.500 298.500z" fill="#7fff00"/><path d="M508 334L517 332.500L519 335L510.500 340z" fill="#7fff00"/><path d="M1005 573L1005 623L1008.500 618L1003.500 632L996.500 622L1000.500 624L998.500 578z" fill="#7fff00"/><path d="M1002 583Q1030 590 1026 610Q1020 628 1005 630L1003 626Q1018 618 1019 605Q1018 590 1000 587z" fill="#7fff00"/><path d="M1031.500 612L1069 623.500" stroke="#7fff00" stroke-width="3" /><path d="M1087.500 627.500L1070 616.500Q1066 624 1070 631.500z" fill="#7fff00" stroke-width=".6"/><ellipse cx="1069.500" cy="624.300" rx="2.400" ry="7" transform="rotate(-15 1069.5 624.3)" fill="#7fff00" stroke-width=".6"/><path d="M375 875L396 873L395 877L399 875.500L419 866L425 869.500L425 872L398 893L388 889L392 884L379 882z" fill="#7fff00"/><path d="M409 884L425 888L425 896L404 891z" fill="#7fff00"/><path d="M380 884Q382 905 396 910Q412 912 424 896L420 894Q410 904 398 903Q388 898 386 885z" fill="#7fff00"/><path d="M386 890Q392 906 404 910Q414 908 420 900" fill="none" stroke-width="1"/><path d="M404.200 968.800L404.200 931" stroke="#7fff00" stroke-width="3.200"/><path d="M404.200 915.500L398.300 930Q404 934 410.200 930z" fill="#7fff00" stroke-width=".6"/></g><rect x="555.5" y="257.5" width="20.5" height="14.2" fill="#c0c0c0" opacity="1"/><text x="557.5" y="268.6" font-family="Liberation Sans,sans-serif" font-size="11" fill="#000" textLength="16.5" lengthAdjust="spacingAndGlyphs">5.0</text><rect x="506.7" y="282.7" width="23.3" height="13.0" fill="#c0c0c0" opacity="1"/><text x="508.7" y="293.2" font-family="Liberation Sans,sans-serif" font-size="11" fill="#000" textLength="19.3" lengthAdjust="spacingAndGlyphs">-1.5</text><rect x="1014.7" y="577.2" width="30.0" height="14.5" fill="#c0c0c0" opacity="1"/><text x="1016.7" y="588.5" font-family="Liberation Sans,sans-serif" font-size="11" fill="#000" textLength="26.0" lengthAdjust="spacingAndGlyphs">-70.0</text><rect x="1000.8" y="629.2" width="25.9" height="14.1" fill="#c0c0c0" opacity="1"/><text x="1002.8" y="640.2" font-family="Liberation Sans,sans-serif" font-size="11" fill="#000" textLength="21.9" lengthAdjust="spacingAndGlyphs">45.6</text><rect x="1098.4" y="617.6" width="25.2" height="14.1" fill="#c0c0c0" opacity="1"/><text x="1100.4" y="628.7" font-family="Liberation Sans,sans-serif" font-size="11" fill="#000" textLength="21.2" lengthAdjust="spacingAndGlyphs">11.3</text><rect x="443" y="881.2" width="29.8" height="14.3" fill="#c0c0c0" opacity="1"/><text x="445" y="892.4" font-family="Liberation Sans,sans-serif" font-size="11" fill="#000" textLength="25.8" lengthAdjust="spacingAndGlyphs">-11.3</text><rect x="394.2" y="891.3" width="20.0" height="14.0" fill="#c0c0c0" opacity="0.55"/><text x="396.2" y="902.3" font-family="Liberation Sans,sans-serif" font-size="11" fill="#000" textLength="16.0" lengthAdjust="spacingAndGlyphs">1.7</text><rect x="403.4" y="967" width="25.6" height="13.6" fill="#c0c0c0" opacity="1"/><text x="405.4" y="977.8" font-family="Liberation Sans,sans-serif" font-size="11" fill="#000" textLength="21.6" lengthAdjust="spacingAndGlyphs">46.6</text></svg>
<div class="r" style="left:1262px;top:165px;width:6px;height:874px;background:#c8c8c8;"></div>
<div class="r" style="left:1268px;top:191px;width:1px;height:848px;background:#a0a0a0;"></div>
<div class="r" style="left:1912px;top:191px;width:1px;height:848px;background:#b0b0b0;"></div>
<div class="r" style="left:1268px;top:165px;width:645px;height:1px;background:#c8ccd0;"></div>
<div class="r" style="left:1268px;top:166px;width:645px;height:25px;background:#f37021;"></div>
<div class="r" style="left:1399px;top:170px;width:52px;height:21px;background:#f0f0f0;"></div>
<span class="t" style="left:1286.2px;top:173.2px;font-size:12.5px;line-height:15.0px;color:#fff;transform:scaleX(0.913);">Analysis</span>
<span class="t" style="left:1355.3px;top:173.2px;font-size:12.5px;line-height:15.0px;color:#fff;transform:scaleX(0.875);">Plates</span>
<span class="t" style="left:1412.7px;top:173.2px;font-size:12.5px;line-height:15.0px;color:#f37021;transform:scaleX(0.903);">Bolts</span>
<span class="t" style="left:1464.2px;top:173.2px;font-size:12.5px;line-height:15.0px;color:#fff;transform:scaleX(0.916);">Welds</span>
<span class="t" style="left:1284.5px;top:206.9px;font-size:12.5px;line-height:15.0px;color:#f26a1b;transform:scaleX(1.043);font-weight:700;">Check of bolts for extreme load effect</span>
<div class="r" style="left:1885px;top:201px;width:17px;height:372px;background:#f0f0f0;"></div>
<div class="r" style="left:1885px;top:218px;width:17px;height:148.5px;background:#cdcdcd;"></div>
<svg class="r" style="left:1889px;top:206px" width="10" height="7" viewBox="0 0 10 7"><path d="M1.500 5.500l3.500-3.500 3.500 3.500" fill="none" stroke="#808080" stroke-width="1.200"/></svg>
<svg class="r" style="left:1889px;top:561px" width="10" height="7" viewBox="0 0 10 7"><path d="M1.500 1.500l3.500 3.500 3.500-3.500" fill="none" stroke="#808080" stroke-width="1.200"/></svg>
<div class="r" style="left:1279.5px;top:225.5px;width:548.5px;height:34px;background:#f0f0f0;"></div>
<div class="r" style="left:1279.5px;top:259.5px;width:548.5px;height:29px;background:#ebebeb;"></div>
<div class="r" style="left:1279.5px;top:225px;width:549.5px;height:1px;background:#a6a6a6;"></div>
<div class="r" style="left:1279.5px;top:259px;width:549.5px;height:1px;background:#a6a6a6;"></div>
<div class="r" style="left:1279.5px;top:288px;width:549.5px;height:1px;background:#a6a6a6;"></div>
<div class="r" style="left:1308px;top:516px;width:521px;height:1px;background:#a6a6a6;"></div>
<div class="r" style="left:1279.5px;top:516px;width:29px;height:1px;background:#a6a6a6;"></div>
<div class="r" style="left:1279.5px;top:545px;width:549.5px;height:1px;background:#a6a6a6;"></div>
<div class="r" style="left:1279px;top:225px;width:1px;height:348px;background:#a6a6a6;"></div>
<div class="r" style="left:1308px;top:225px;width:1px;height:348px;background:#a6a6a6;"></div>
<div class="r" style="left:1338px;top:225px;width:1px;height:92px;background:#a6a6a6;"></div>
<div class="r" style="left:1338px;top:516px;width:1px;height:57px;background:#a6a6a6;"></div>
<div class="r" style="left:1385px;top:225px;width:1px;height:92px;background:#a6a6a6;"></div>
<div class="r" style="left:1385px;top:516px;width:1px;height:57px;background:#a6a6a6;"></div>
<div class="r" style="left:1424px;top:225px;width:1px;height:92px;background:#a6a6a6;"></div>
<div class="r" style="left:1424px;top:516px;width:1px;height:57px;background:#a6a6a6;"></div>
<div class="r" style="left:1479px;top:225px;width:1px;height:92px;background:#a6a6a6;"></div>
<div class="r" style="left:1479px;top:516px;width:1px;height:57px;background:#a6a6a6;"></div>
<div class="r" style="left:1522px;top:225px;width:1px;height:92px;background:#a6a6a6;"></div>
<div class="r" style="left:1522px;top:516px;width:1px;height:57px;background:#a6a6a6;"></div>
<div class="r" style="left:1572px;top:225px;width:1px;height:92px;background:#a6a6a6;"></div>
<div class="r" style="left:1572px;top:516px;width:1px;height:57px;background:#a6a6a6;"></div>
<div class="r" style="left:1626px;top:225px;width:1px;height:92px;background:#a6a6a6;"></div>
<div class="r" style="left:1626px;top:516px;width:1px;height:57px;background:#a6a6a6;"></div>
<div class="r" style="left:1676px;top:225px;width:1px;height:92px;background:#a6a6a6;"></div>
<div class="r" style="left:1676px;top:516px;width:1px;height:57px;background:#a6a6a6;"></div>
<div class="r" style="left:1726px;top:225px;width:1px;height:92px;background:#a6a6a6;"></div>
<div class="r" style="left:1726px;top:516px;width:1px;height:57px;background:#a6a6a6;"></div>
<div class="r" style="left:1776px;top:225px;width:1px;height:92px;background:#a6a6a6;"></div>
<div class="r" style="left:1776px;top:516px;width:1px;height:57px;background:#a6a6a6;"></div>
<div class="r" style="left:1828px;top:225px;width:1.5px;height:348px;background:#a6a6a6;"></div>
<span class="t" style="left:1342.8px;top:236.3px;font-size:12px;line-height:14.4px;color:#333;transform:scaleX(0.954);font-weight:700;">Status</span>
<span class="t" style="left:1390.0px;top:236.3px;font-size:12px;line-height:14.4px;color:#333;transform:scaleX(1.062);font-weight:700;">Item</span>
<span class="t" style="left:1429.2px;top:236.3px;font-size:12px;line-height:14.4px;color:#333;transform:scaleX(0.960);font-weight:700;">Grade</span>
<span class="t" style="left:1484.2px;top:236.3px;font-size:12px;line-height:14.4px;color:#333;transform:scaleX(0.866);font-weight:700;">Loads</span>
<span class="t" style="left:1527.0px;top:228.8px;font-size:12px;line-height:14.4px;color:#333;transform:scaleX(0.971);font-weight:700;">Ft</span>
<span class="t" style="left:1527.0px;top:244.3px;font-size:12px;line-height:14.4px;color:#333;transform:scaleX(0.986);font-weight:700;">[kN]</span>
<span class="t" style="left:1577.0px;top:228.8px;font-size:12px;line-height:14.4px;color:#333;transform:scaleX(1.000);font-weight:700;">V</span>
<span class="t" style="left:1577.0px;top:244.3px;font-size:12px;line-height:14.4px;color:#333;transform:scaleX(0.986);font-weight:700;">[kN]</span>
<span class="t" style="left:1632.0px;top:228.8px;font-size:12px;line-height:14.4px;color:#333;transform:scaleX(0.912);font-weight:700;">Fb,Rd</span>
<span class="t" style="left:1632.0px;top:244.3px;font-size:12px;line-height:14.4px;color:#333;transform:scaleX(0.986);font-weight:700;">[kN]</span>
<span class="t" style="left:1682.0px;top:228.8px;font-size:12px;line-height:14.4px;color:#333;transform:scaleX(1.141);font-weight:700;">Utt</span>
<span class="t" style="left:1682.0px;top:244.3px;font-size:12px;line-height:14.4px;color:#333;transform:scaleX(0.965);font-weight:700;">[%]</span>
<span class="t" style="left:1732.0px;top:228.8px;font-size:12px;line-height:14.4px;color:#333;transform:scaleX(0.983);font-weight:700;">Uts</span>
<span class="t" style="left:1732.0px;top:244.3px;font-size:12px;line-height:14.4px;color:#333;transform:scaleX(0.965);font-weight:700;">[%]</span>
<span class="t" style="left:1781.8px;top:228.8px;font-size:12px;line-height:14.4px;color:#333;transform:scaleX(1.063);font-weight:700;">Utts</span>
<span class="t" style="left:1781.8px;top:244.3px;font-size:12px;line-height:14.4px;color:#333;transform:scaleX(0.975);font-weight:700;">[%]</span>
<svg class="r" style="left:1315px;top:265.5px" width="18" height="18" viewBox="0 0 18 18"><rect x="0.500" y="0.500" width="17" height="17" fill="#fff" stroke="#9a9a9a" stroke-width="1"/><path d="M4 9h10" stroke="#111" stroke-width="2"/><path d="M9 4v10" stroke="#111" stroke-width="2"/></svg>
<svg class="r" style="left:1353px;top:265.5px" width="18" height="18" viewBox="0 0 18 18"><defs><linearGradient id="cg274" x1="0" y1="0" x2="0" y2="1"><stop offset="0" stop-color="#6fd46f"/><stop offset="1" stop-color="#35a535"/></linearGradient></defs><circle cx="9" cy="9" r="8.300" fill="url(#cg274)" stroke="#4cb04c" stroke-width=".6"/><path d="M4.800 9.300l3 3 5.400-6.200" fill="none" stroke="#fff" stroke-width="2.200" stroke-linecap="round" stroke-linejoin="round"/></svg>
<span class="t" style="left:1390.3px;top:267.3px;font-size:12px;line-height:14.4px;color:#222;transform:scaleX(0.930);">B2</span>
<span class="t" style="left:1429.2px;top:267.3px;font-size:12px;line-height:14.4px;color:#222;transform:scaleX(0.899);">12 8.8 - 1</span>
<span class="t" style="left:1484.2px;top:267.3px;font-size:12px;line-height:14.4px;color:#222;transform:scaleX(0.773);">LE1</span>
<span class="t" style="left:1527.0px;top:267.3px;font-size:12px;line-height:14.4px;color:#222;transform:scaleX(0.920);">18.3</span>
<span class="t" style="left:1577.0px;top:267.3px;font-size:12px;line-height:14.4px;color:#222;transform:scaleX(0.920);">1.6</span>
<span class="t" style="left:1632.0px;top:267.3px;font-size:12px;line-height:14.4px;color:#222;transform:scaleX(0.920);">63.0</span>
<span class="t" style="left:1682.0px;top:267.3px;font-size:12px;line-height:14.4px;color:#222;transform:scaleX(0.920);">40.2</span>
<span class="t" style="left:1732.0px;top:267.3px;font-size:12px;line-height:14.4px;color:#222;transform:scaleX(0.920);">5.1</span>
<span class="t" style="left:1781.8px;top:267.3px;font-size:12px;line-height:14.4px;color:#222;transform:scaleX(0.920);">33.9</span>
<svg class="r" style="left:1315px;top:294.7px" width="18" height="18" viewBox="0 0 18 18"><rect x="0.500" y="0.500" width="17" height="17" fill="#fff" stroke="#9a9a9a" stroke-width="1"/><path d="M4 9h10" stroke="#111" stroke-width="2"/></svg>
<svg class="r" style="left:1353px;top:294.7px" width="18" height="18" viewBox="0 0 18 18"><defs><linearGradient id="cg303" x1="0" y1="0" x2="0" y2="1"><stop offset="0" stop-color="#6fd46f"/><stop offset="1" stop-color="#35a535"/></linearGradient></defs><circle cx="9" cy="9" r="8.300" fill="url(#cg303)" stroke="#4cb04c" stroke-width=".6"/><path d="M4.800 9.300l3 3 5.400-6.200" fill="none" stroke="#fff" stroke-width="2.200" stroke-linecap="round" stroke-linejoin="round"/></svg>
<span class="t" style="left:1390.3px;top:296.5px;font-size:12px;line-height:14.4px;color:#222;transform:scaleX(0.930);">B3</span>
<span class="t" style="left:1429.2px;top:296.5px;font-size:12px;line-height:14.4px;color:#222;transform:scaleX(0.899);">12 8.8 - 1</span>
<span class="t" style="left:1484.2px;top:296.5px;font-size:12px;line-height:14.4px;color:#222;transform:scaleX(0.773);">LE1</span>
<span class="t" style="left:1527.0px;top:296.5px;font-size:12px;line-height:14.4px;color:#222;transform:scaleX(0.920);">4.2</span>
<span class="t" style="left:1577.0px;top:296.5px;font-size:12px;line-height:14.4px;color:#222;transform:scaleX(0.920);">0.1</span>
<span class="t" style="left:1632.0px;top:296.5px;font-size:12px;line-height:14.4px;color:#222;transform:scaleX(0.920);">69.1</span>
<span class="t" style="left:1682.0px;top:296.5px;font-size:12px;line-height:14.4px;color:#222;transform:scaleX(0.920);">9.2</span>
<span class="t" style="left:1732.0px;top:296.5px;font-size:12px;line-height:14.4px;color:#222;transform:scaleX(0.920);">0.2</span>
<span class="t" style="left:1781.8px;top:296.5px;font-size:12px;line-height:14.4px;color:#222;transform:scaleX(0.920);">6.8</span>
<svg class="r" style="left:1315px;top:522.5px" width="18" height="18" viewBox="0 0 18 18"><rect x="0.500" y="0.500" width="17" height="17" fill="#fff" stroke="#9a9a9a" stroke-width="1"/><path d="M4 9h10" stroke="#111" stroke-width="2"/><path d="M9 4v10" stroke="#111" stroke-width="2"/></svg>
<svg class="r" style="left:1353px;top:522.45px" width="18" height="18" viewBox="0 0 18 18"><defs><linearGradient id="cg531" x1="0" y1="0" x2="0" y2="1"><stop offset="0" stop-color="#6fd46f"/><stop offset="1" stop-color="#35a535"/></linearGradient></defs><circle cx="9" cy="9" r="8.300" fill="url(#cg531)" stroke="#4cb04c" stroke-width=".6"/><path d="M4.800 9.300l3 3 5.400-6.200" fill="none" stroke="#fff" stroke-width="2.200" stroke-linecap="round" stroke-linejoin="round"/></svg>
<span class="t" style="left:1390.3px;top:524.2px;font-size:12px;line-height:14.4px;color:#222;transform:scaleX(0.930);">B5</span>
<span class="t" style="left:1429.2px;top:524.2px;font-size:12px;line-height:14.4px;color:#222;transform:scaleX(0.899);">12 8.8 - 1</span>
<span class="t" style="left:1484.2px;top:524.2px;font-size:12px;line-height:14.4px;color:#222;transform:scaleX(0.773);">LE1</span>
<span class="t" style="left:1527.0px;top:524.2px;font-size:12px;line-height:14.4px;color:#222;transform:scaleX(0.920);">18.5</span>
<span class="t" style="left:1577.0px;top:524.2px;font-size:12px;line-height:14.4px;color:#222;transform:scaleX(0.920);">1.8</span>
<span class="t" style="left:1632.0px;top:524.2px;font-size:12px;line-height:14.4px;color:#222;transform:scaleX(0.920);">63.4</span>
<span class="t" style="left:1682.0px;top:524.2px;font-size:12px;line-height:14.4px;color:#222;transform:scaleX(0.920);">40.5</span>
<span class="t" style="left:1732.0px;top:524.2px;font-size:12px;line-height:14.4px;color:#222;transform:scaleX(0.920);">6.0</span>
<span class="t" style="left:1781.8px;top:524.2px;font-size:12px;line-height:14.4px;color:#222;transform:scaleX(0.920);">35.0</span>
<svg class="r" style="left:1315px;top:551.7px" width="18" height="18" viewBox="0 0 18 18"><rect x="0.500" y="0.500" width="17" height="17" fill="#fff" stroke="#9a9a9a" stroke-width="1"/><path d="M4 9h10" stroke="#111" stroke-width="2"/><path d="M9 4v10" stroke="#111" stroke-width="2"/></svg>
<svg class="r" style="left:1353px;top:551.7px" width="18" height="18" viewBox="0 0 18 18"><defs><linearGradient id="cg560" x1="0" y1="0" x2="0" y2="1"><stop offset="0" stop-color="#6fd46f"/><stop offset="1" stop-color="#35a535"/></linearGradient></defs><circle cx="9" cy="9" r="8.300" fill="url(#cg560)" stroke="#4cb04c" stroke-width=".6"/><path d="M4.800 9.300l3 3 5.400-6.200" fill="none" stroke="#fff" stroke-width="2.200" stroke-linecap="round" stroke-linejoin="round"/></svg>
<span class="t" style="left:1390.3px;top:553.5px;font-size:12px;line-height:14.4px;color:#222;transform:scaleX(0.930);">B6</span>
<span class="t" style="left:1429.2px;top:553.5px;font-size:12px;line-height:14.4px;color:#222;transform:scaleX(0.899);">12 8.8 - 1</span>
<span class="t" style="left:1484.2px;top:553.5px;font-size:12px;line-height:14.4px;color:#222;transform:scaleX(0.773);">LE1</span>
<span class="t" style="left:1527.0px;top:553.5px;font-size:12px;line-height:14.4px;color:#222;transform:scaleX(0.920);">4.2</span>
<span class="t" style="left:1577.0px;top:553.5px;font-size:12px;line-height:14.4px;color:#222;transform:scaleX(0.920);">0.4</span>
<span class="t" style="left:1632.0px;top:553.5px;font-size:12px;line-height:14.4px;color:#222;transform:scaleX(0.920);">69.1</span>
<span class="t" style="left:1682.0px;top:553.5px;font-size:12px;line-height:14.4px;color:#222;transform:scaleX(0.920);">9.2</span>
<span class="t" style="left:1732.0px;top:553.5px;font-size:12px;line-height:14.4px;color:#222;transform:scaleX(0.920);">1.3</span>
<span class="t" style="left:1781.8px;top:553.5px;font-size:12px;line-height:14.4px;color:#222;transform:scaleX(0.920);">7.9</span>
<svg class="r" style="left:1288px;top:268px" width="12" height="13" viewBox="0 0 12 13"><path d="M3 1.500l5.500 5-5.500 5" fill="none" stroke="#333" stroke-width="1.400"/></svg>
<div class="r" style="left:1309px;top:317.5px;width:503px;height:183px;background:#fff;"></div>
<span class="t" style="left:1325.7px;top:329.7px;font-size:12px;line-height:14.4px;color:#111;transform:scaleX(0.991);font-weight:700;">Tension resistance check</span>
<span class="t" style="left:1474.0px;top:329.7px;font-size:12px;line-height:14.4px;color:#222;transform:scaleX(0.995);">(EN 1993-1-8 tab 3.4)</span>
<span class="t" style="left:1332.0px;top:353.0px;font-size:17px;line-height:20.4px;color:#333;transform:scaleX(1.011);font-style:italic;font-family:'Liberation Serif',serif;">F</span>
<span class="t" style="left:1341.5px;top:361.0px;font-size:11px;line-height:13.2px;color:#333;transform:scaleX(1.026);font-style:italic;font-family:'Liberation Serif',serif;">t,Rd</span>
<span class="t" style="left:1366.0px;top:353.5px;font-size:17px;line-height:20.4px;color:#333;transform:scaleX(1.095);font-family:'Liberation Serif',serif;">=</span>
<span class="t" style="left:1382.0px;top:353.2px;font-size:8.5px;line-height:10.2px;color:#333;transform:scaleX(1.000);font-style:italic;font-family:'Liberation Serif',serif;">k</span>
<span class="t" style="left:1386.0px;top:356.3px;font-size:6px;line-height:7.2px;color:#333;transform:scaleX(1.000);font-family:'Liberation Serif',serif;">2</span>
<span class="t" style="left:1392.0px;top:353.2px;font-size:8.5px;line-height:10.2px;color:#333;transform:scaleX(1.000);font-style:italic;font-family:'Liberation Serif',serif;">f</span>
<span class="t" style="left:1395.5px;top:356.5px;font-size:6px;line-height:7.2px;color:#333;transform:scaleX(1.000);font-style:italic;font-family:'Liberation Serif',serif;">ub</span>
<span class="t" style="left:1405.0px;top:353.2px;font-size:8.5px;line-height:10.2px;color:#333;transform:scaleX(1.000);font-style:italic;font-family:'Liberation Serif',serif;">A</span>
<span class="t" style="left:1411.5px;top:356.5px;font-size:6px;line-height:7.2px;color:#333;transform:scaleX(1.000);font-style:italic;font-family:'Liberation Serif',serif;">s</span>
<div class="r" style="left:1381.8px;top:364.3px;width:37.5px;height:0.8px;background:#333;"></div>
<span class="t" style="left:1392.0px;top:365.5px;font-size:8.5px;line-height:10.2px;color:#333;transform:scaleX(1.000);font-style:italic;font-family:'Liberation Serif',serif;">γ</span>
<span class="t" style="left:1396.5px;top:368.5px;font-size:6px;line-height:7.2px;color:#333;transform:scaleX(1.000);font-style:italic;font-family:'Liberation Serif',serif;">M2</span>
<span class="t" style="left:1425.7px;top:353.5px;font-size:17px;line-height:20.4px;color:#333;transform:scaleX(1.116);font-family:'Liberation Serif',serif;">=</span>
<span class="t" style="left:1453.7px;top:356.5px;font-size:12px;line-height:14.4px;color:#222;transform:scaleX(0.963);">45.6</span>
<span class="t" style="left:1489.5px;top:356.5px;font-size:12px;line-height:14.4px;color:#222;transform:scaleX(0.927);">kN</span>
<span class="t" style="left:1516.4px;top:358.1px;font-size:10px;line-height:12.0px;color:#222;transform:scaleX(1.093);">≥</span>
<span class="t" style="left:1535.5px;top:353.0px;font-size:17px;line-height:20.4px;color:#333;transform:scaleX(1.011);font-style:italic;font-family:'Liberation Serif',serif;">F</span>
<span class="t" style="left:1544.5px;top:361.0px;font-size:11px;line-height:13.2px;color:#333;transform:scaleX(1.145);font-style:italic;font-family:'Liberation Serif',serif;">t</span>
<span class="t" style="left:1554.0px;top:353.5px;font-size:17px;line-height:20.4px;color:#333;transform:scaleX(1.085);font-family:'Liberation Serif',serif;">=</span>
<span class="t" style="left:1581.6px;top:356.5px;font-size:12px;line-height:14.4px;color:#222;transform:scaleX(0.953);">4.2</span>
<span class="t" style="left:1610.3px;top:356.5px;font-size:12px;line-height:14.4px;color:#222;transform:scaleX(0.961);">kN</span>
<span class="t" style="left:1365.5px;top:384.8px;font-size:12px;line-height:14.4px;color:#222;transform:scaleX(0.975);">where:</span>
<span class="t" style="left:1366.0px;top:400.9px;font-size:16px;line-height:19.2px;color:#333;transform:scaleX(1.056);font-style:italic;font-family:'Liberation Serif',serif;">k</span>
<span class="t" style="left:1373.5px;top:407.8px;font-size:10.5px;line-height:12.6px;color:#333;transform:scaleX(0.857);font-family:'Liberation Serif',serif;">2</span>
<span class="t" style="left:1384.0px;top:401.4px;font-size:16px;line-height:19.2px;color:#333;transform:scaleX(1.097);font-family:'Liberation Serif',serif;">=</span>
<span class="t" style="left:1398.6px;top:403.6px;font-size:12px;line-height:14.4px;color:#222;transform:scaleX(0.972);">0.90</span>
<span class="t" style="left:1473.2px;top:403.6px;font-size:12px;line-height:14.4px;color:#222;transform:scaleX(0.995);">– Factor</span>
<span class="t" style="left:1366.0px;top:424.6px;font-size:16px;line-height:19.2px;color:#333;transform:scaleX(1.575);font-style:italic;font-family:'Liberation Serif',serif;">f</span>
<span class="t" style="left:1372.5px;top:432.3px;font-size:10.5px;line-height:12.6px;color:#333;transform:scaleX(0.952);font-style:italic;font-family:'Liberation Serif',serif;">ub</span>
<span class="t" style="left:1388.9px;top:425.6px;font-size:16px;line-height:19.2px;color:#333;transform:scaleX(1.075);font-family:'Liberation Serif',serif;">=</span>
<span class="t" style="left:1403.2px;top:427.7px;font-size:12px;line-height:14.4px;color:#222;transform:scaleX(0.984);">800.0 MPa</span>
<span class="t" style="left:1473.2px;top:427.7px;font-size:12px;line-height:14.4px;color:#222;transform:scaleX(1.000);">– Ultimate tensile strength of the bolt</span>
<span class="t" style="left:1366.4px;top:448.9px;font-size:16px;line-height:19.2px;color:#333;transform:scaleX(0.972);font-style:italic;font-family:'Liberation Serif',serif;">A</span>
<span class="t" style="left:1376.0px;top:456.3px;font-size:10.5px;line-height:12.6px;color:#333;transform:scaleX(1.101);font-style:italic;font-family:'Liberation Serif',serif;">s</span>
<span class="t" style="left:1386.8px;top:449.9px;font-size:16px;line-height:19.2px;color:#333;transform:scaleX(1.119);font-family:'Liberation Serif',serif;">=</span>
<span class="t" style="left:1401.3px;top:453.8px;font-size:12px;line-height:14.4px;color:#222;transform:scaleX(0.979);">79 mm</span>
<span class="t" style="left:1437.8px;top:451.2px;font-size:9px;line-height:10.8px;color:#222;transform:scaleX(0.959);">2</span>
<span class="t" style="left:1473.2px;top:451.5px;font-size:12px;line-height:14.4px;color:#222;transform:scaleX(1.001);">– Tensile stress area of the bolt</span>
<span class="t" style="left:1365.5px;top:474.1px;font-size:16px;line-height:19.2px;color:#333;transform:scaleX(1.269);font-style:italic;font-family:'Liberation Serif',serif;">γ</span>
<span class="t" style="left:1373.0px;top:480.8px;font-size:10.5px;line-height:12.6px;color:#333;transform:scaleX(1.072);font-style:italic;font-family:'Liberation Serif',serif;">M2</span>
<span class="t" style="left:1394.2px;top:473.6px;font-size:16px;line-height:19.2px;color:#333;transform:scaleX(1.097);font-family:'Liberation Serif',serif;">=</span>
<span class="t" style="left:1409.4px;top:475.5px;font-size:12px;line-height:14.4px;color:#222;transform:scaleX(0.942);">1.25</span>
<span class="t" style="left:1473.2px;top:475.5px;font-size:12px;line-height:14.4px;color:#222;transform:scaleX(0.995);">– Safety factor</span>
<div class="r" style="left:1811.5px;top:317.5px;width:16px;height:183px;background:#f0f0f0;"></div>
<div class="r" style="left:1813.5px;top:334.5px;width:12px;height:23px;background:#c1c1c1;"></div>
<svg class="r" style="left:1815px;top:323px" width="9" height="6" viewBox="0 0 9 6"><path d="M0.500 5.500h8l-4-4.500z" fill="#a0a0a0"/></svg>
<svg class="r" style="left:1815px;top:488px" width="9" height="6" viewBox="0 0 9 6"><path d="M0.500 0.500h8l-4 4.500z" fill="#505050"/></svg>
<div class="r" style="left:1309px;top:500px;width:502.5px;height:16px;background:#f0f0f0;"></div>
<div class="r" style="left:1811.5px;top:500px;width:16px;height:16px;background:#dcdcdc;"></div>
<div class="r" style="left:1326px;top:502px;width:321px;height:12.5px;background:#c1c1c1;"></div>
<svg class="r" style="left:1314px;top:504px" width="6" height="9" viewBox="0 0 6 9"><path d="M5.500 0.500v8l-4.500-4z" fill="#b0b0b0"/></svg>
<svg class="r" style="left:1800px;top:504px" width="6" height="9" viewBox="0 0 6 9"><path d="M0.500 0.500v8l4.500-4z" fill="#404040"/></svg>
<div class="r" style="left:1269px;top:573px;width:643px;height:10px;background:#fff;"></div>
<div class="r" style="left:1268px;top:582.5px;width:645px;height:5.5px;background:#c8c8c8;"></div>
<div class="r" style="left:1268px;top:587.5px;width:645px;height:0.8px;background:#aaa;"></div>
<div class="r" style="left:1271.5px;top:592.5px;width:23px;height:22px;background:#dcdcdc;box-sizing:border-box;border:1px solid #b8b8b8"></div>
<svg class="r" style="left:1274px;top:595px" width="18" height="17" viewBox="0 0 18 17"><g fill="none" stroke="#666" stroke-width="1"><path d="M3.500 6.500v-3h3M3.500 3.500l3 3M11.500 3.500h3v3M14.500 3.500l-3 3M3.500 10.500v3h3M3.500 13.500l3-3M14.500 10.500v3h-3M14.500 13.500l-3-3"/></g></svg>
<svg class="r" style="left:1450.200px;top:611.300px" width="87" height="405" viewBox="0 0 86.600 404.500"><defs><clipPath id="pc"><rect width="86.600" height="404.500"/></clipPath><filter id="pb" x="-20%" y="-5%" width="140%" height="110%"><feGaussianBlur stdDeviation="1.3"/></filter></defs><g clip-path="url(#pc)"><rect width="86.6" height="404.5" fill="#fdec30"/><g filter="url(#pb)"><path d="M-5 -5H92V78Q80 84 70 82L60 84Q44 70 30 84L14 92Q6 96 -5 120z" fill="#dce636"/><path d="M-5 -5H92V70Q78 80 66 76Q44 60 24 80L12 86Q4 100 -5 150z" fill="#a8c838"/><path d="M-5 -5H92V36Q70 30 50 36Q30 30 14 38Q8 60 10 100Q8 160 4 230L-5 240z" fill="#55a038"/><path d="M-5 -5H92V31Q70 25 50 31Q30 26 12 33Q6 60 7 100Q5 150 2 200L-5 210z" fill="#3ab888"/><path d="M-5 -5H92V27Q70 21 50 27Q30 22 10 28Q4 50 4 100L1 150L-5 160z" fill="#30eef0"/><path d="M-5 -5H92V21Q70 16 50 21Q30 16 8 22Q3 40 2 90L-5 110z" fill="#38b8f8"/><path d="M-5 -5H92V14Q70 9 50 15Q30 10 6 15Q2 30 0 60L-5 70z" fill="#3a3af2"/><path d="M-5 -5H12Q8 8 0 14L-5 16z" fill="#5c30c0"/><path d="M50 -5H66Q62 6 56 8Q52 6 50 -5z" fill="#5c30c0"/><path d="M38 34H50V62Q44 68 30 64Q28 54 38 46z" fill="#4a9a30"/><path d="M10 40Q14 34 20 36L16 50L12 92L8 96z" fill="#55a038"/><path d="M12 70L22 78L24 92L12 96z" fill="#55a038"/><path d="M26 44Q34 40 38 48L34 64Q28 70 24 60z" fill="#dce636"/><path d="M52 40Q70 34 78 44L80 72Q66 80 54 70z" fill="#fdec30"/><path d="M78 34Q90 30 90 50Q90 70 80 66Q74 50 78 34z" fill="#f8b030"/><path d="M82 38Q90 36 90 50Q90 62 84 60Q80 50 82 38z" fill="#f06030"/><path d="M66 60Q80 58 84 70Q76 80 66 74z" fill="#f8b030"/><path d="M56 100Q66 96 68 110Q66 126 58 124Q54 112 56 100z" fill="#fdd630"/><path d="M24 132Q20 170 14 200L14 232Q40 236 66 226L66 200Q50 170 30 150z" fill="#fdd630"/><path d="M90 100Q80 110 79 140Q76 180 80 230L84 250L90 252z" fill="#a8c838"/><path d="M90 110Q83 120 82 150Q80 190 83 230L90 245z" fill="#55a038"/><path d="M-5 200L4 196Q8 230 8 270L-5 276z" fill="#a8c838"/><path d="M-6 405L-6 242Q-6 228 8 228L79 228Q93 228 93 242L93 405z" fill="#dce636"/><path d="M-4 405L-4 252Q-4 236 12 236L75 236Q91 236 91 252L91 405z" fill="#a8c838"/><path d="M-1 405L-1 262Q-1 244 17 244L70 244Q88 244 88 262L88 405z" fill="#55a038"/><path d="M5 405L5 269Q5 251 23 251L66 251Q84 251 84 269L84 405z" fill="#3ab888"/><path d="M11 405L11 275Q11 257 29 257L61 257Q79 257 79 275L79 405z" fill="#30eef0"/><path d="M17 405L17 279Q17 263 33 263L56 263Q72 263 72 279L72 405z" fill="#38b8f8"/><path d="M23 405L23 282Q23 268 37 268L52.599999999999994 268Q66.6 268 66.6 282L66.6 405z" fill="#3a3af2"/><path d="M31.500 405L35.500 300Q36 278 46 277Q60 276 61 300L53 405z" fill="#5c30c0"/><path d="M-5 405V300L1 300L2 405z" fill="#55a038"/></g><circle cx="23.4" cy="40.3" r="4.200" fill="#f05030"/><circle cx="23.4" cy="40.3" r="2.500" fill="#111" stroke="#444" stroke-width=".4"/><circle cx="23.4" cy="40.3" r=".7" fill="#fff"/><path d="M27.3 41.1L36.1 42.9M25.6 43.6L30.6 51.1M22.6 44.2L20.8 53.0M20.1 42.5L12.6 47.5M19.5 39.5L10.7 37.7M21.2 37.0L16.2 29.5M24.2 36.4L26.0 27.6M26.7 38.1L34.2 33.1" stroke="#000" stroke-width=".45" opacity=".8"/><path d="M36.1 42.9L30.6 51.1L20.8 53.0L12.6 47.5L10.7 37.7L16.2 29.5L26.0 27.6L34.2 33.1z" fill="none" stroke="#000" stroke-width=".45" opacity=".8"/><circle cx="63.3" cy="40.3" r="4.200" fill="#f05030"/><circle cx="63.3" cy="40.3" r="2.500" fill="#bbb" stroke="#444" stroke-width=".4"/><circle cx="63.3" cy="40.3" r=".7" fill="#fff"/><path d="M67.2 41.1L76.0 42.9M65.5 43.6L70.5 51.1M62.5 44.2L60.7 53.0M60.0 42.5L52.5 47.5M59.4 39.5L50.6 37.7M61.1 37.0L56.1 29.5M64.1 36.4L65.9 27.6M66.6 38.1L74.1 33.1" stroke="#000" stroke-width=".45" opacity=".8"/><path d="M76.0 42.9L70.5 51.1L60.7 53.0L52.5 47.5L50.6 37.7L56.1 29.5L65.9 27.6L74.1 33.1z" fill="none" stroke="#000" stroke-width=".45" opacity=".8"/><circle cx="23.4" cy="66" r="4.200" fill="#e8e8a0"/><circle cx="23.4" cy="66" r="2.500" fill="#bbb" stroke="#444" stroke-width=".4"/><circle cx="23.4" cy="66" r=".7" fill="#fff"/><path d="M27.3 66.8L36.1 68.6M25.6 69.3L30.6 76.8M22.6 69.9L20.8 78.7M20.1 68.2L12.6 73.2M19.5 65.2L10.7 63.4M21.2 62.7L16.2 55.2M24.2 62.1L26.0 53.3M26.7 63.8L34.2 58.8" stroke="#000" stroke-width=".45" opacity=".8"/><path d="M36.1 68.6L30.6 76.8L20.8 78.7L12.6 73.2L10.7 63.4L16.2 55.2L26.0 53.3L34.2 58.8z" fill="none" stroke="#000" stroke-width=".45" opacity=".8"/><circle cx="63.3" cy="66" r="4.200" fill="#f08030"/><circle cx="63.3" cy="66" r="2.500" fill="#bbb" stroke="#444" stroke-width=".4"/><circle cx="63.3" cy="66" r=".7" fill="#fff"/><path d="M67.2 66.8L76.0 68.6M65.5 69.3L70.5 76.8M62.5 69.9L60.7 78.7M60.0 68.2L52.5 73.2M59.4 65.2L50.6 63.4M61.1 62.7L56.1 55.2M64.1 62.1L65.9 53.3M66.6 63.8L74.1 58.8" stroke="#000" stroke-width=".45" opacity=".8"/><path d="M76.0 68.6L70.5 76.8L60.7 78.7L52.5 73.2L50.6 63.4L56.1 55.2L65.9 53.3L74.1 58.8z" fill="none" stroke="#000" stroke-width=".45" opacity=".8"/><path d="M0.00 0V404.5M12.37 0V404.5M24.74 0V404.5M37.11 0V404.5M49.49 0V404.5M61.86 0V404.5M74.23 0V404.5M86.60 0V404.5M0 0.00H86.6M0 11.56H86.6M0 23.11H86.6M0 34.67H86.6M0 46.23H86.6M0 57.79H86.6M0 69.34H86.6M0 80.90H86.6M0 92.46H86.6M0 104.01H86.6M0 115.57H86.6M0 127.13H86.6M0 138.69H86.6M0 150.24H86.6M0 161.80H86.6M0 173.36H86.6M0 184.91H86.6M0 196.47H86.6M0 208.03H86.6M0 219.59H86.6M0 231.14H86.6M0 242.70H86.6M0 254.26H86.6M0 265.81H86.6M0 277.37H86.6M0 288.93H86.6M0 300.49H86.6M0 312.04H86.6M0 323.60H86.6M0 335.16H86.6M0 346.71H86.6M0 358.27H86.6M0 369.83H86.6M0 381.39H86.6M0 392.94H86.6M0 404.50H86.6" fill="none" stroke="#000" stroke-width=".55" opacity=".8"/></g></svg>
<span class="t" style="left:31.8px;top:1049.7px;font-size:12px;line-height:14.4px;color:#8c8c8c;transform:scaleX(0.929);font-weight:700;">Design code:</span>
<span class="t" style="left:107.5px;top:1049.7px;font-size:12px;line-height:14.4px;color:#fff;transform:scaleX(0.855);font-weight:700;">EN</span>
<span class="t" style="left:142.5px;top:1049.7px;font-size:12px;line-height:14.4px;color:#8c8c8c;transform:scaleX(0.853);font-weight:700;">Analysis:</span>
<span class="t" style="left:193.0px;top:1049.7px;font-size:12px;line-height:14.4px;color:#fff;transform:scaleX(0.937);font-weight:700;">Stress, strain</span>
<span class="t" style="left:284.5px;top:1049.7px;font-size:12px;line-height:14.4px;color:#8c8c8c;transform:scaleX(0.954);font-weight:700;">Load effects:</span>
<span class="t" style="left:361.2px;top:1049.7px;font-size:12px;line-height:14.4px;color:#fff;transform:scaleX(0.969);font-weight:700;">In equilibrium</span>
<span class="t" style="left:458.8px;top:1049.7px;font-size:12px;line-height:14.4px;color:#8c8c8c;transform:scaleX(0.919);font-weight:700;">Units:</span>
<span class="t" style="left:498.5px;top:1049.7px;font-size:12px;line-height:14.4px;color:#fff;transform:scaleX(1.008);font-weight:700;">mm</span>
<span class="t" style="left:1789.0px;top:1049.7px;font-size:12.5px;line-height:15.0px;color:#f37021;transform:scaleX(1.021);">www.</span>
<span class="t" style="left:1819.5px;top:1049.7px;font-size:12.5px;line-height:15.0px;color:#fff;transform:scaleX(0.962);">ideastatica</span>
<span class="t" style="left:1877.0px;top:1049.7px;font-size:12.5px;line-height:15.0px;color:#f37021;transform:scaleX(0.923);">.com</span>
<svg class="r" style="left:0;top:0" width="1920" height="1079" viewBox="0 0 1920 1079"><rect x="426" y="34" width="112.3" height="40" rx="7" fill="none" stroke="#ff0000" stroke-width="4"/><rect x="881.1" y="69" width="72.9" height="83.9" rx="7" fill="none" stroke="#ff0000" stroke-width="4"/><rect x="1074.25" y="72" width="105.65" height="72.9" rx="7" fill="none" stroke="#ff0000" stroke-width="4"/><rect x="1393" y="159" width="66" height="43" rx="8" fill="none" stroke="#ff0000" stroke-width="4"/><rect x="1308.2" y="287" width="31.5" height="34.3" rx="6" fill="none" stroke="#ff0000" stroke-width="4"/></svg>
</body></html>
